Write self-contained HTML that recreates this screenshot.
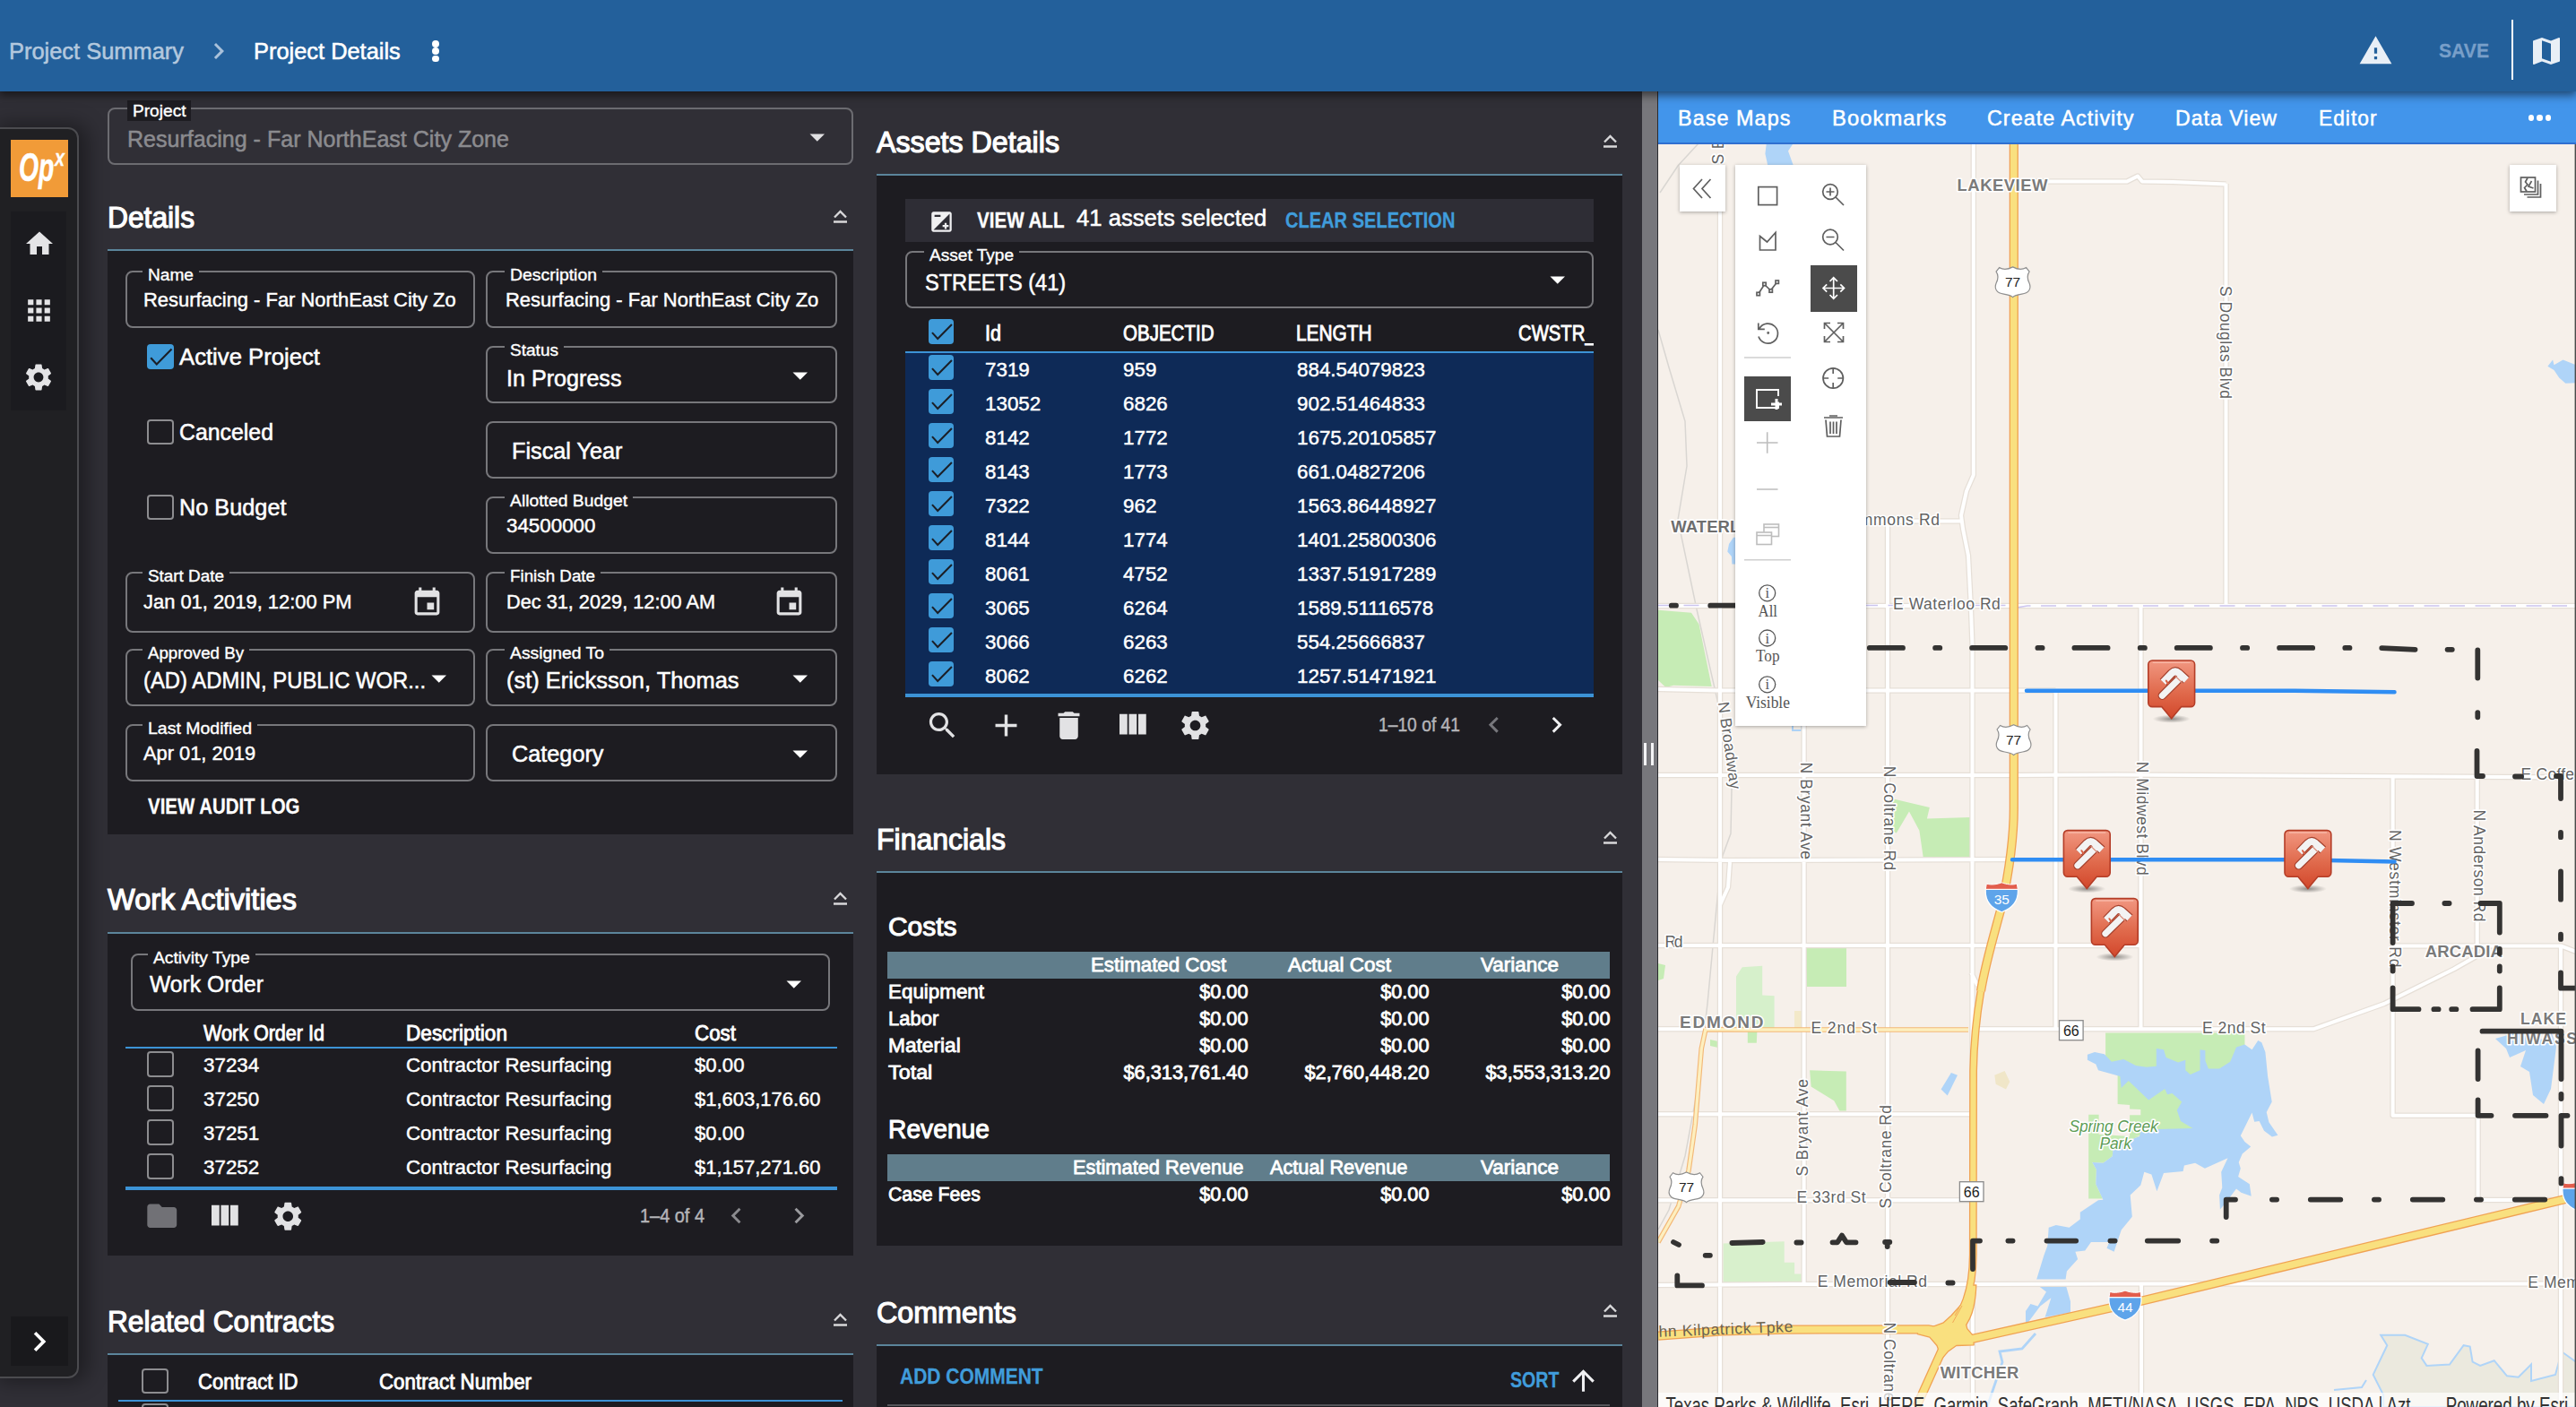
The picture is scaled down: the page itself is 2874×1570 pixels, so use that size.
<!DOCTYPE html>
<html lang="en"><head><meta charset="utf-8"><title>Project Details</title>
<style>

html,body{margin:0;padding:0;background:#302f36;overflow:hidden}
@media (max-width:1500px){#root{transform:scale(.5);transform-origin:0 0}}
#root{position:relative;width:2874px;height:1570px;overflow:hidden;background:#302f36;font-family:"Liberation Sans",sans-serif;color:#fff}
#root div,#root svg,#root span.t{position:absolute}
.t{white-space:nowrap;line-height:1;transform-origin:0 0}
.f{border:2px solid #77777b;border-radius:8px;box-sizing:border-box}
.cb{box-sizing:border-box;border:2px solid #8d8d90;border-radius:4px;width:30px;height:28px}
.cbk{border-radius:4px;width:30px;height:28px;background:#3f9bd9}

</style></head>
<body>
<div id="root">
<div style="left:-4px;top:142px;width:92px;height:1396px;background:#202023;border:2px solid #4b4b4f;border-radius:0 12px 12px 0;box-sizing:border-box;box-shadow:6px 0 22px 4px rgba(0,0,0,.38)"></div>
<div style="left:12px;top:156px;width:64px;height:64px;background:#f19b38"></div>
<span class="t" style="top:164.6px;font-size:44px;font-weight:700;-webkit-text-stroke:0.53px;font-style:italic;left:21.2px;transform:scaleX(0.6431);">Op</span>
<span class="t" style="top:164.4px;font-size:25px;font-weight:700;-webkit-text-stroke:0.30px;font-style:italic;left:61.0px;transform:scaleX(0.7910);">x</span>
<div style="left:12px;top:236px;width:62px;height:222px;background:#1b1b1f"></div>
<svg style="left:25.5px;top:253.5px;" width="36" height="36" viewBox="0 0 24 24"><path fill="#e4e4e6" d="M10 20v-6h4v6h5v-8h3L12 3 2 12h3v8z"/></svg>
<svg style="left:24.5px;top:327.5px;" width="37" height="37" viewBox="0 0 24 24"><path fill="#e4e4e6" d="M4 8h4V4H4v4zm6 12h4v-4h-4v4zm-6 0h4v-4H4v4zm0-6h4v-4H4v4zm6 0h4v-4h-4v4zm6-10v4h4V4h-4zm-6 4h4V4h-4v4zm6 6h4v-4h-4v4zm0 6h4v-4h-4v4z"/></svg>
<svg style="left:25px;top:402.5px;" width="36" height="36" viewBox="0 0 24 24"><path fill="#e4e4e6" d="M19.14 12.94c.04-.3.06-.61.06-.94 0-.32-.02-.64-.07-.94l2.03-1.58c.18-.14.23-.41.12-.61l-1.92-3.32c-.12-.22-.37-.29-.59-.22l-2.39.96c-.5-.38-1.03-.7-1.62-.94l-.36-2.54c-.04-.24-.24-.41-.48-.41h-3.84c-.24 0-.43.17-.47.41l-.36 2.54c-.59.24-1.13.57-1.62.94l-2.39-.96c-.22-.08-.47 0-.59.22L2.74 8.87c-.12.21-.08.47.12.61l2.03 1.58c-.05.3-.09.63-.09.94s.02.64.07.94l-2.03 1.58c-.18.14-.23.41-.12.61l1.92 3.32c.12.22.37.29.59.22l2.39-.96c.5.38 1.03.7 1.62.94l.36 2.54c.05.24.24.41.48.41h3.84c.24 0 .44-.17.47-.41l.36-2.54c.59-.24 1.13-.56 1.62-.94l2.39.96c.22.08.47 0 .59-.22l1.92-3.32c.12-.22.07-.47-.12-.61l-2.01-1.58zM12 15.6c-1.98 0-3.6-1.62-3.6-3.6s1.62-3.6 3.6-3.6 3.6 1.62 3.6 3.6-1.62 3.6-3.6 3.6z"/></svg>
<div style="left:12px;top:1469px;width:64px;height:55px;background:#19191c"></div>
<svg style="left:22px;top:1475px;" width="44" height="44" viewBox="0 0 24 24"><path fill="#fff" d="M10 6L8.59 7.41 13.17 12l-4.58 4.59L10 18l6-6z"/></svg>
<div class="f" style="left:120px;top:120px;width:832px;height:64px;border-color:#6c6c71;"></div>
<div style="left:142px;top:112px;width:71px;height:23px;background:#1d1c21"></div>
<span class="t" style="top:114.7px;font-size:18.8px;-webkit-text-stroke:0.39px;left:147.5px;transform:scaleX(1.0179);">Project</span>
<span class="t" style="top:142.7px;font-size:25.5px;-webkit-text-stroke:0.54px;color:#8b8b8f;left:141.5px;transform:scaleX(0.9823);">Resurfacing - Far NorthEast City Zone</span>
<svg style="left:892.0px;top:132.9px;" width="39.5" height="39.5" viewBox="0 0 24 24"><path fill="#e0e0e2" d="M7 10l5 5 5-5z"/></svg>
<span class="t" style="top:227.1px;font-size:32.5px;-webkit-text-stroke:1.20px;left:120.0px;transform:scaleX(0.9764);">Details</span>
<div style="left:120px;top:278px;width:832px;height:2px;background:#5b859b"></div>
<svg style="left:929px;top:232.7px;" width="17" height="16" viewBox="0 0 17 16"><path d="M2 9.5 L8.5 3 L15 9.5" fill="none" stroke="#d8d8da" stroke-width="2.3"/><path d="M1 14.5 H16" stroke="#d8d8da" stroke-width="2.5"/></svg>
<div style="left:120px;top:280px;width:832px;height:651px;background:#1d1c21"></div>
<div class="f" style="left:140px;top:302px;width:390px;height:64px;"></div>
<div style="left:159px;top:300px;width:63px;height:6px;background:#1d1c21"></div>
<span class="t" style="top:297.8px;font-size:18.8px;-webkit-text-stroke:0.39px;left:165.0px;transform:scaleX(1.0178);">Name</span>
<span class="t" style="top:324.1px;font-size:22.6px;-webkit-text-stroke:0.47px;left:160.4px;transform:scaleX(0.9707);">Resurfacing - Far NorthEast City Zo</span>
<div class="f" style="left:542px;top:302px;width:392px;height:64px;"></div>
<div style="left:563px;top:300px;width:109px;height:6px;background:#1d1c21"></div>
<span class="t" style="top:297.8px;font-size:18.8px;-webkit-text-stroke:0.39px;left:569.0px;transform:scaleX(1.0324);">Description</span>
<span class="t" style="top:324.1px;font-size:22.6px;-webkit-text-stroke:0.47px;left:563.7px;transform:scaleX(0.9727);">Resurfacing - Far NorthEast City Zo</span>
<div class="cbk" style="left:164px;top:384px;width:30px;height:28px"><svg style="left:0;top:0" width="30" height="28" viewBox="0 0 30 28"><path d="M4.2 15.2 L10.8 22.5 L27.5 5.5" fill="none" stroke="#1b1f27" stroke-width="2.15"/></svg></div>
<span class="t" style="top:386.1px;font-size:25.6px;-webkit-text-stroke:0.54px;left:200.0px;transform:scaleX(1.0034);">Active Project</span>
<div class="f" style="left:542px;top:386px;width:392px;height:64px;"></div>
<div style="left:563px;top:384px;width:66px;height:6px;background:#1d1c21"></div>
<span class="t" style="top:381.8px;font-size:18.8px;-webkit-text-stroke:0.39px;left:569.0px;transform:scaleX(1.0141);">Status</span>
<span class="t" style="top:409.6px;font-size:25px;-webkit-text-stroke:0.53px;left:564.5px;transform:scaleX(1.0051);">In Progress</span>
<svg style="left:872.8px;top:399.4px;" width="39.5" height="39.5" viewBox="0 0 24 24"><path fill="#fff" d="M7 10l5 5 5-5z"/></svg>
<div class="cb" style="left:164px;top:468px;width:30px;height:28px"></div>
<span class="t" style="top:470.1px;font-size:25.6px;-webkit-text-stroke:0.54px;left:200.0px;transform:scaleX(0.9710);">Canceled</span>
<div class="f" style="left:542px;top:470px;width:392px;height:64px;"></div>
<span class="t" style="top:490.8px;font-size:25px;-webkit-text-stroke:0.53px;left:570.5px;transform:scaleX(1.0098);">Fiscal Year</span>
<div class="cb" style="left:164px;top:552px;width:30px;height:28px"></div>
<span class="t" style="top:554.1px;font-size:25.6px;-webkit-text-stroke:0.54px;left:200.0px;transform:scaleX(0.9880);">No Budget</span>
<div class="f" style="left:542px;top:554px;width:392px;height:64px;"></div>
<div style="left:563px;top:552px;width:143px;height:6px;background:#1d1c21"></div>
<span class="t" style="top:549.8px;font-size:18.8px;-webkit-text-stroke:0.39px;left:569.0px;transform:scaleX(1.0283);">Allotted Budget</span>
<span class="t" style="top:576.2px;font-size:22.6px;-webkit-text-stroke:0.47px;left:564.5px;transform:scaleX(0.9897);">34500000</span>
<div class="f" style="left:140px;top:638px;width:390px;height:68px;"></div>
<div style="left:159px;top:636px;width:97px;height:6px;background:#1d1c21"></div>
<span class="t" style="top:633.8px;font-size:18.8px;-webkit-text-stroke:0.39px;left:165.0px;transform:scaleX(1.0052);">Start Date</span>
<span class="t" style="top:661.4px;font-size:22.6px;-webkit-text-stroke:0.47px;left:160.4px;transform:scaleX(0.9695);">Jan 01, 2019, 12:00 PM</span>
<svg style="left:458px;top:653.5px;" width="37" height="37" viewBox="0 0 24 24"><path fill="#e2e2e4" d="M17 12h-5v5h5v-5zM16 1v2H8V1H6v2H5c-1.11 0-1.99.9-1.99 2L3 19c0 1.1.89 2 2 2h14c1.1 0 2-.9 2-2V5c0-1.1-.9-2-2-2h-1V1h-2zm3 18H5V8h14v11z"/></svg>
<div class="f" style="left:542px;top:638px;width:392px;height:68px;"></div>
<div style="left:563px;top:636px;width:107px;height:6px;background:#1d1c21"></div>
<span class="t" style="top:633.8px;font-size:18.8px;-webkit-text-stroke:0.39px;left:569.0px;transform:scaleX(1.0000);">Finish Date</span>
<span class="t" style="top:661.4px;font-size:22.6px;-webkit-text-stroke:0.47px;left:564.5px;transform:scaleX(0.9611);">Dec 31, 2029, 12:00 AM</span>
<svg style="left:862px;top:653.5px;" width="37" height="37" viewBox="0 0 24 24"><path fill="#e2e2e4" d="M17 12h-5v5h5v-5zM16 1v2H8V1H6v2H5c-1.11 0-1.99.9-1.99 2L3 19c0 1.1.89 2 2 2h14c1.1 0 2-.9 2-2V5c0-1.1-.9-2-2-2h-1V1h-2zm3 18H5V8h14v11z"/></svg>
<div class="f" style="left:140px;top:724px;width:390px;height:64px;"></div>
<div style="left:159px;top:722px;width:119px;height:6px;background:#1d1c21"></div>
<span class="t" style="top:719.8px;font-size:18.8px;-webkit-text-stroke:0.39px;left:165.0px;transform:scaleX(0.9949);">Approved By</span>
<span class="t" style="top:746.8px;font-size:25px;-webkit-text-stroke:0.53px;left:160.4px;transform:scaleX(0.9531);">(AD) ADMIN, PUBLIC WOR...</span>
<svg style="left:469.9px;top:736.9px;" width="39.5" height="39.5" viewBox="0 0 24 24"><path fill="#fff" d="M7 10l5 5 5-5z"/></svg>
<div class="f" style="left:542px;top:724px;width:392px;height:64px;"></div>
<div style="left:563px;top:722px;width:117px;height:6px;background:#1d1c21"></div>
<span class="t" style="top:719.8px;font-size:18.8px;-webkit-text-stroke:0.39px;left:569.0px;transform:scaleX(1.0296);">Assigned To</span>
<span class="t" style="top:746.8px;font-size:25px;-webkit-text-stroke:0.53px;left:564.5px;transform:scaleX(1.0170);">(st) Ericksson, Thomas</span>
<svg style="left:872.8px;top:736.9px;" width="39.5" height="39.5" viewBox="0 0 24 24"><path fill="#fff" d="M7 10l5 5 5-5z"/></svg>
<div class="f" style="left:140px;top:808px;width:390px;height:64px;"></div>
<div style="left:159px;top:806px;width:128px;height:6px;background:#1d1c21"></div>
<span class="t" style="top:803.8px;font-size:18.8px;-webkit-text-stroke:0.39px;left:165.0px;transform:scaleX(1.0383);">Last Modified</span>
<span class="t" style="top:829.5px;font-size:22.6px;-webkit-text-stroke:0.47px;left:160.4px;transform:scaleX(0.9668);">Apr 01, 2019</span>
<div class="f" style="left:542px;top:808px;width:392px;height:64px;"></div>
<span class="t" style="top:829.3px;font-size:25px;-webkit-text-stroke:0.53px;left:570.5px;transform:scaleX(1.0103);">Category</span>
<svg style="left:872.8px;top:821.4px;" width="39.5" height="39.5" viewBox="0 0 24 24"><path fill="#fff" d="M7 10l5 5 5-5z"/></svg>
<span class="t" style="top:889.1px;font-size:23.5px;font-weight:700;-webkit-text-stroke:0.28px;left:165.0px;transform:scaleX(0.8694);">VIEW AUDIT LOG</span>
<span class="t" style="top:988.3px;font-size:32.5px;-webkit-text-stroke:1.20px;left:120.0px;transform:scaleX(1.0014);">Work Activities</span>
<div style="left:120px;top:1040px;width:832px;height:2px;background:#5b859b"></div>
<svg style="left:929px;top:993.7px;" width="17" height="16" viewBox="0 0 17 16"><path d="M2 9.5 L8.5 3 L15 9.5" fill="none" stroke="#d8d8da" stroke-width="2.3"/><path d="M1 14.5 H16" stroke="#d8d8da" stroke-width="2.5"/></svg>
<div style="left:120px;top:1042px;width:832px;height:359px;background:#1d1c21"></div>
<div class="f" style="left:146px;top:1064px;width:780px;height:64px;"></div>
<div style="left:165px;top:1062px;width:119.69999999999999px;height:6px;background:#1d1c21"></div>
<span class="t" style="top:1059.8px;font-size:18.8px;-webkit-text-stroke:0.39px;left:171.0px;transform:scaleX(1.0250);">Activity Type</span>
<span class="t" style="top:1086.2px;font-size:25px;-webkit-text-stroke:0.53px;left:167.0px;transform:scaleX(0.9865);">Work Order</span>
<svg style="left:866.2px;top:1077.9px;" width="39.5" height="39.5" viewBox="0 0 24 24"><path fill="#fff" d="M7 10l5 5 5-5z"/></svg>
<span class="t" style="top:1141.5px;font-size:23.5px;-webkit-text-stroke:0.87px;left:227.0px;transform:scaleX(0.9175);">Work Order Id</span>
<span class="t" style="top:1141.5px;font-size:23.5px;-webkit-text-stroke:0.87px;left:453.0px;transform:scaleX(0.9613);">Description</span>
<span class="t" style="top:1141.5px;font-size:23.5px;-webkit-text-stroke:0.87px;left:775.0px;transform:scaleX(0.9518);">Cost</span>
<div style="left:140px;top:1167.6px;width:794px;height:2px;background:#3c93d6"></div>
<div class="cb" style="left:164px;top:1172.5px;width:30px;height:29px"></div>
<span class="t" style="top:1177.8px;font-size:22.6px;-webkit-text-stroke:0.47px;left:227.3px;transform:scaleX(0.9900);">37234</span>
<span class="t" style="top:1177.8px;font-size:22.6px;-webkit-text-stroke:0.47px;left:453.0px;transform:scaleX(0.9878);">Contractor Resurfacing</span>
<span class="t" style="top:1177.8px;font-size:22.6px;-webkit-text-stroke:0.47px;left:775.0px;transform:scaleX(0.9815);">$0.00</span>
<div class="cb" style="left:164px;top:1210.5px;width:30px;height:29px"></div>
<span class="t" style="top:1215.8px;font-size:22.6px;-webkit-text-stroke:0.47px;left:227.3px;transform:scaleX(0.9900);">37250</span>
<span class="t" style="top:1215.8px;font-size:22.6px;-webkit-text-stroke:0.47px;left:453.0px;transform:scaleX(0.9878);">Contractor Resurfacing</span>
<span class="t" style="top:1215.8px;font-size:22.6px;-webkit-text-stroke:0.47px;left:775.0px;transform:scaleX(0.9723);">$1,603,176.60</span>
<div class="cb" style="left:164px;top:1248.5px;width:30px;height:29px"></div>
<span class="t" style="top:1253.8px;font-size:22.6px;-webkit-text-stroke:0.47px;left:227.3px;transform:scaleX(0.9900);">37251</span>
<span class="t" style="top:1253.8px;font-size:22.6px;-webkit-text-stroke:0.47px;left:453.0px;transform:scaleX(0.9878);">Contractor Resurfacing</span>
<span class="t" style="top:1253.8px;font-size:22.6px;-webkit-text-stroke:0.47px;left:775.0px;transform:scaleX(0.9815);">$0.00</span>
<div class="cb" style="left:164px;top:1286.5px;width:30px;height:29px"></div>
<span class="t" style="top:1291.8px;font-size:22.6px;-webkit-text-stroke:0.47px;left:227.3px;transform:scaleX(0.9900);">37252</span>
<span class="t" style="top:1291.8px;font-size:22.6px;-webkit-text-stroke:0.47px;left:453.0px;transform:scaleX(0.9878);">Contractor Resurfacing</span>
<span class="t" style="top:1291.8px;font-size:22.6px;-webkit-text-stroke:0.47px;left:775.0px;transform:scaleX(0.9723);">$1,157,271.60</span>
<div style="left:140px;top:1324px;width:794px;height:4px;background:#3c93d6"></div>
<svg style="left:161px;top:1336.5px;" width="39.5" height="39.5" viewBox="0 0 24 24"><path fill="#717176" d="M10 4H4c-1.1 0-1.99.9-1.99 2L2 18c0 1.1.9 2 2 2h16c1.1 0 2-.9 2-2V8c0-1.1-.9-2-2-2h-8l-2-2z"/></svg>
<svg style="left:229px;top:1336.4px;" width="42" height="42" viewBox="0 0 24 24"><path fill="#e2e2e4" d="M10 18h5V5h-5v13zm-6 0h5V5H4v13zM16 5v13h5V5h-5z"/></svg>
<svg style="left:302px;top:1338px;" width="38.5" height="38.5" viewBox="0 0 24 24"><path fill="#e2e2e4" d="M19.14 12.94c.04-.3.06-.61.06-.94 0-.32-.02-.64-.07-.94l2.03-1.58c.18-.14.23-.41.12-.61l-1.92-3.32c-.12-.22-.37-.29-.59-.22l-2.39.96c-.5-.38-1.03-.7-1.62-.94l-.36-2.54c-.04-.24-.24-.41-.48-.41h-3.84c-.24 0-.43.17-.47.41l-.36 2.54c-.59.24-1.13.57-1.62.94l-2.39-.96c-.22-.08-.47 0-.59.22L2.74 8.87c-.12.21-.08.47.12.61l2.03 1.58c-.05.3-.09.63-.09.94s.02.64.07.94l-2.03 1.58c-.18.14-.23.41-.12.61l1.92 3.32c.12.22.37.29.59.22l2.39-.96c.5.38 1.03.7 1.62.94l.36 2.54c.05.24.24.41.48.41h3.84c.24 0 .44-.17.47-.41l.36-2.54c.59-.24 1.13-.56 1.62-.94l2.39.96c.22.08.47 0 .59-.22l1.92-3.32c.12-.22.07-.47-.12-.61l-2.01-1.58zM12 15.6c-1.98 0-3.6-1.62-3.6-3.6s1.62-3.6 3.6-3.6 3.6 1.62 3.6 3.6-1.62 3.6-3.6 3.6z"/></svg>
<span class="t" style="top:1347.4px;font-size:21.5px;-webkit-text-stroke:0.45px;color:#b4b4b8;left:714.0px;transform:scaleX(0.9264);">1–4 of 4</span>
<svg style="left:804.1px;top:1339.3px;" width="35" height="35" viewBox="0 0 24 24"><path fill="#8a8a8e" d="M15.41 7.41L14 6l-6 6 6 6 1.41-1.41L10.83 12z"/></svg>
<svg style="left:873.5px;top:1339.3px;" width="35" height="35" viewBox="0 0 24 24"><path fill="#9a9a9e" d="M10 6L8.59 7.41 13.17 12l-4.58 4.59L10 18l6-6z"/></svg>
<span class="t" style="top:1458.5px;font-size:32.5px;-webkit-text-stroke:1.20px;left:120.0px;transform:scaleX(0.9726);">Related Contracts</span>
<div style="left:120px;top:1510px;width:832px;height:2px;background:#5b859b"></div>
<svg style="left:929px;top:1464.2px;" width="17" height="16" viewBox="0 0 17 16"><path d="M2 9.5 L8.5 3 L15 9.5" fill="none" stroke="#d8d8da" stroke-width="2.3"/><path d="M1 14.5 H16" stroke="#d8d8da" stroke-width="2.5"/></svg>
<div style="left:120px;top:1512px;width:832px;height:80px;background:#1d1c21"></div>
<div class="cb" style="left:158px;top:1526.5px;width:30px;height:28px"></div>
<span class="t" style="top:1531.4px;font-size:23.5px;-webkit-text-stroke:0.87px;left:220.5px;transform:scaleX(0.9382);">Contract ID</span>
<span class="t" style="top:1531.4px;font-size:23.5px;-webkit-text-stroke:0.87px;left:423.0px;transform:scaleX(0.9501);">Contract Number</span>
<div style="left:132px;top:1562px;width:808px;height:2px;background:#3c93d6"></div>
<div class="cb" style="left:158px;top:1566px;width:30px;height:28px"></div>
<span class="t" style="top:142.9px;font-size:32.5px;-webkit-text-stroke:1.20px;left:978.0px;transform:scaleX(0.9907);">Assets Details</span>
<div style="left:978px;top:194px;width:832px;height:2px;background:#5b859b"></div>
<svg style="left:1788px;top:149px;" width="17" height="16" viewBox="0 0 17 16"><path d="M2 9.5 L8.5 3 L15 9.5" fill="none" stroke="#d8d8da" stroke-width="2.3"/><path d="M1 14.5 H16" stroke="#d8d8da" stroke-width="2.5"/></svg>
<div style="left:978px;top:196px;width:832px;height:668px;background:#1d1c21"></div>
<div style="left:1010px;top:222px;width:768px;height:48px;background:#2e2d35"></div>
<svg style="left:1036.5px;top:233.5px;" width="27" height="27" viewBox="0 0 24 24"><path fill="#f0f0f2" d="M15 17v2h2v-2h2v-2h-2v-2h-2v2h-2v2h2zm5-15H4c-1.1 0-2 .9-2 2v16c0 1.1.9 2 2 2h16c1.1 0 2-.9 2-2V4c0-1.1-.9-2-2-2zM5 5h6v2H5V5zm15 15H4L20 4v16z"/></svg>
<span class="t" style="top:234.8px;font-size:23px;font-weight:700;-webkit-text-stroke:0.28px;left:1090.0px;transform:scaleX(0.8942);">VIEW ALL</span>
<span class="t" style="top:230.6px;font-size:25px;-webkit-text-stroke:0.53px;left:1200.7px;transform:scaleX(1.0252);">41 assets selected</span>
<span class="t" style="top:234.8px;font-size:23px;font-weight:700;-webkit-text-stroke:0.28px;color:#409cdb;left:1433.6px;transform:scaleX(0.8719);">CLEAR SELECTION</span>
<div class="f" style="left:1010px;top:280px;width:768px;height:64px;"></div>
<div style="left:1031px;top:278px;width:106px;height:6px;background:#1d1c21"></div>
<span class="t" style="top:275.8px;font-size:18.8px;-webkit-text-stroke:0.39px;left:1037.0px;transform:scaleX(1.0154);">Asset Type</span>
<span class="t" style="top:302.8px;font-size:25px;-webkit-text-stroke:0.53px;left:1031.8px;transform:scaleX(0.9430);">STREETS (41)</span>
<svg style="left:1718.2px;top:292.4px;" width="39.5" height="39.5" viewBox="0 0 24 24"><path fill="#fff" d="M7 10l5 5 5-5z"/></svg>
<div class="cbk" style="left:1035.7px;top:356px;width:28.3px;height:28px"><svg style="left:0;top:0" width="28.3" height="28" viewBox="0 0 30 28"><path d="M4.2 15.2 L10.8 22.5 L27.5 5.5" fill="none" stroke="#1b1f27" stroke-width="2.15"/></svg></div>
<span class="t" style="top:361.1px;font-size:23.5px;-webkit-text-stroke:0.87px;left:1099.0px;transform:scaleX(0.9179);">Id</span>
<span class="t" style="top:361.1px;font-size:23.5px;-webkit-text-stroke:0.87px;left:1252.5px;transform:scaleX(0.8734);">OBJECTID</span>
<span class="t" style="top:361.1px;font-size:23.5px;-webkit-text-stroke:0.87px;left:1446.4px;transform:scaleX(0.8875);">LENGTH</span>
<div style="left:1694px;top:355px;width:84px;height:36px;overflow:hidden"></div>
<span class="t" style="top:361.1px;font-size:23.5px;-webkit-text-stroke:0.87px;left:1694.3px;transform:scaleX(0.8636);">CWSTR_</span>
<div style="left:1778px;top:355px;width:32px;height:36px;background:#1d1c21"></div>
<div style="left:1010px;top:392px;width:768px;height:2px;background:#3c93d6"></div>
<div style="left:1010px;top:394px;width:768px;height:380px;background:#0e2a57"></div>
<div class="cbk" style="left:1035.7px;top:395.8px;width:28.3px;height:28px"><svg style="left:0;top:0" width="28.3" height="28" viewBox="0 0 30 28"><path d="M4.2 15.2 L10.8 22.5 L27.5 5.5" fill="none" stroke="#1b1f27" stroke-width="2.15"/></svg></div>
<span class="t" style="top:401.9px;font-size:22.6px;-webkit-text-stroke:0.47px;left:1099.3px;transform:scaleX(0.9900);">7319</span>
<span class="t" style="top:401.9px;font-size:22.6px;-webkit-text-stroke:0.47px;left:1252.8px;transform:scaleX(0.9900);">959</span>
<span class="t" style="top:401.9px;font-size:22.6px;-webkit-text-stroke:0.47px;left:1446.7px;transform:scaleX(0.9900);">884.54079823</span>
<div class="cbk" style="left:1035.7px;top:433.8px;width:28.3px;height:28px"><svg style="left:0;top:0" width="28.3" height="28" viewBox="0 0 30 28"><path d="M4.2 15.2 L10.8 22.5 L27.5 5.5" fill="none" stroke="#1b1f27" stroke-width="2.15"/></svg></div>
<span class="t" style="top:439.9px;font-size:22.6px;-webkit-text-stroke:0.47px;left:1099.3px;transform:scaleX(0.9900);">13052</span>
<span class="t" style="top:439.9px;font-size:22.6px;-webkit-text-stroke:0.47px;left:1252.8px;transform:scaleX(0.9900);">6826</span>
<span class="t" style="top:439.9px;font-size:22.6px;-webkit-text-stroke:0.47px;left:1446.7px;transform:scaleX(0.9900);">902.51464833</span>
<div class="cbk" style="left:1035.7px;top:471.8px;width:28.3px;height:28px"><svg style="left:0;top:0" width="28.3" height="28" viewBox="0 0 30 28"><path d="M4.2 15.2 L10.8 22.5 L27.5 5.5" fill="none" stroke="#1b1f27" stroke-width="2.15"/></svg></div>
<span class="t" style="top:477.9px;font-size:22.6px;-webkit-text-stroke:0.47px;left:1099.3px;transform:scaleX(0.9900);">8142</span>
<span class="t" style="top:477.9px;font-size:22.6px;-webkit-text-stroke:0.47px;left:1252.8px;transform:scaleX(0.9900);">1772</span>
<span class="t" style="top:477.9px;font-size:22.6px;-webkit-text-stroke:0.47px;left:1446.7px;transform:scaleX(0.9900);">1675.20105857</span>
<div class="cbk" style="left:1035.7px;top:509.8px;width:28.3px;height:28px"><svg style="left:0;top:0" width="28.3" height="28" viewBox="0 0 30 28"><path d="M4.2 15.2 L10.8 22.5 L27.5 5.5" fill="none" stroke="#1b1f27" stroke-width="2.15"/></svg></div>
<span class="t" style="top:515.9px;font-size:22.6px;-webkit-text-stroke:0.47px;left:1099.3px;transform:scaleX(0.9900);">8143</span>
<span class="t" style="top:515.9px;font-size:22.6px;-webkit-text-stroke:0.47px;left:1252.8px;transform:scaleX(0.9900);">1773</span>
<span class="t" style="top:515.9px;font-size:22.6px;-webkit-text-stroke:0.47px;left:1446.7px;transform:scaleX(0.9900);">661.04827206</span>
<div class="cbk" style="left:1035.7px;top:547.8px;width:28.3px;height:28px"><svg style="left:0;top:0" width="28.3" height="28" viewBox="0 0 30 28"><path d="M4.2 15.2 L10.8 22.5 L27.5 5.5" fill="none" stroke="#1b1f27" stroke-width="2.15"/></svg></div>
<span class="t" style="top:553.9px;font-size:22.6px;-webkit-text-stroke:0.47px;left:1099.3px;transform:scaleX(0.9900);">7322</span>
<span class="t" style="top:553.9px;font-size:22.6px;-webkit-text-stroke:0.47px;left:1252.8px;transform:scaleX(0.9900);">962</span>
<span class="t" style="top:553.9px;font-size:22.6px;-webkit-text-stroke:0.47px;left:1446.7px;transform:scaleX(0.9900);">1563.86448927</span>
<div class="cbk" style="left:1035.7px;top:585.8px;width:28.3px;height:28px"><svg style="left:0;top:0" width="28.3" height="28" viewBox="0 0 30 28"><path d="M4.2 15.2 L10.8 22.5 L27.5 5.5" fill="none" stroke="#1b1f27" stroke-width="2.15"/></svg></div>
<span class="t" style="top:591.9px;font-size:22.6px;-webkit-text-stroke:0.47px;left:1099.3px;transform:scaleX(0.9900);">8144</span>
<span class="t" style="top:591.9px;font-size:22.6px;-webkit-text-stroke:0.47px;left:1252.8px;transform:scaleX(0.9900);">1774</span>
<span class="t" style="top:591.9px;font-size:22.6px;-webkit-text-stroke:0.47px;left:1446.7px;transform:scaleX(0.9900);">1401.25800306</span>
<div class="cbk" style="left:1035.7px;top:623.8px;width:28.3px;height:28px"><svg style="left:0;top:0" width="28.3" height="28" viewBox="0 0 30 28"><path d="M4.2 15.2 L10.8 22.5 L27.5 5.5" fill="none" stroke="#1b1f27" stroke-width="2.15"/></svg></div>
<span class="t" style="top:629.9px;font-size:22.6px;-webkit-text-stroke:0.47px;left:1099.3px;transform:scaleX(0.9900);">8061</span>
<span class="t" style="top:629.9px;font-size:22.6px;-webkit-text-stroke:0.47px;left:1252.8px;transform:scaleX(0.9900);">4752</span>
<span class="t" style="top:629.9px;font-size:22.6px;-webkit-text-stroke:0.47px;left:1446.7px;transform:scaleX(0.9900);">1337.51917289</span>
<div class="cbk" style="left:1035.7px;top:661.8px;width:28.3px;height:28px"><svg style="left:0;top:0" width="28.3" height="28" viewBox="0 0 30 28"><path d="M4.2 15.2 L10.8 22.5 L27.5 5.5" fill="none" stroke="#1b1f27" stroke-width="2.15"/></svg></div>
<span class="t" style="top:667.9px;font-size:22.6px;-webkit-text-stroke:0.47px;left:1099.3px;transform:scaleX(0.9900);">3065</span>
<span class="t" style="top:667.9px;font-size:22.6px;-webkit-text-stroke:0.47px;left:1252.8px;transform:scaleX(0.9900);">6264</span>
<span class="t" style="top:667.9px;font-size:22.6px;-webkit-text-stroke:0.47px;left:1446.7px;transform:scaleX(0.9900);">1589.51116578</span>
<div class="cbk" style="left:1035.7px;top:699.8px;width:28.3px;height:28px"><svg style="left:0;top:0" width="28.3" height="28" viewBox="0 0 30 28"><path d="M4.2 15.2 L10.8 22.5 L27.5 5.5" fill="none" stroke="#1b1f27" stroke-width="2.15"/></svg></div>
<span class="t" style="top:705.9px;font-size:22.6px;-webkit-text-stroke:0.47px;left:1099.3px;transform:scaleX(0.9900);">3066</span>
<span class="t" style="top:705.9px;font-size:22.6px;-webkit-text-stroke:0.47px;left:1252.8px;transform:scaleX(0.9900);">6263</span>
<span class="t" style="top:705.9px;font-size:22.6px;-webkit-text-stroke:0.47px;left:1446.7px;transform:scaleX(0.9900);">554.25666837</span>
<div class="cbk" style="left:1035.7px;top:737.8px;width:28.3px;height:28px"><svg style="left:0;top:0" width="28.3" height="28" viewBox="0 0 30 28"><path d="M4.2 15.2 L10.8 22.5 L27.5 5.5" fill="none" stroke="#1b1f27" stroke-width="2.15"/></svg></div>
<span class="t" style="top:743.9px;font-size:22.6px;-webkit-text-stroke:0.47px;left:1099.3px;transform:scaleX(0.9900);">8062</span>
<span class="t" style="top:743.9px;font-size:22.6px;-webkit-text-stroke:0.47px;left:1252.8px;transform:scaleX(0.9900);">6262</span>
<span class="t" style="top:743.9px;font-size:22.6px;-webkit-text-stroke:0.47px;left:1446.7px;transform:scaleX(0.9900);">1257.51471921</span>
<div style="left:1010px;top:774px;width:768px;height:4px;background:#3c93d6"></div>
<svg style="left:1032px;top:790px;" width="39" height="39" viewBox="0 0 24 24"><path fill="#e2e2e4" d="M15.5 14h-.79l-.28-.27C15.41 12.59 16 11.11 16 9.5 16 5.91 13.09 3 9.5 3S3 5.91 3 9.5 5.91 16 9.5 16c1.61 0 3.09-.59 4.23-1.57l.27.28v.79l5 4.99L20.49 19l-4.99-5zm-6 0C7.01 14 5 11.99 5 9.5S7.01 5 9.5 5 14 7.01 14 9.5 11.99 14 9.5 14z"/></svg>
<svg style="left:1101.5px;top:788.5px;" width="41" height="41" viewBox="0 0 24 24"><path fill="#e2e2e4" d="M19 13h-6v6h-2v-6H5v-2h6V5h2v6h6v2z"/></svg>
<svg style="left:1171.5px;top:788.5px;" width="41" height="41" viewBox="0 0 24 24"><path fill="#e2e2e4" d="M6 19c0 1.1.9 2 2 2h8c1.1 0 2-.9 2-2V7H6v12zM19 4h-3.5l-1-1h-5l-1 1H5v2h14V4z"/></svg>
<svg style="left:1241.7px;top:788px;" width="42" height="42" viewBox="0 0 24 24"><path fill="#e2e2e4" d="M10 18h5V5h-5v13zm-6 0h5V5H4v13zM16 5v13h5V5h-5z"/></svg>
<svg style="left:1313.5px;top:789.5px;" width="39" height="39" viewBox="0 0 24 24"><path fill="#e2e2e4" d="M19.14 12.94c.04-.3.06-.61.06-.94 0-.32-.02-.64-.07-.94l2.03-1.58c.18-.14.23-.41.12-.61l-1.92-3.32c-.12-.22-.37-.29-.59-.22l-2.39.96c-.5-.38-1.03-.7-1.62-.94l-.36-2.54c-.04-.24-.24-.41-.48-.41h-3.84c-.24 0-.43.17-.47.41l-.36 2.54c-.59.24-1.13.57-1.62.94l-2.39-.96c-.22-.08-.47 0-.59.22L2.74 8.87c-.12.21-.08.47.12.61l2.03 1.58c-.05.3-.09.63-.09.94s.02.64.07.94l-2.03 1.58c-.18.14-.23.41-.12.61l1.92 3.32c.12.22.37.29.59.22l2.39-.96c.5.38 1.03.7 1.62.94l.36 2.54c.05.24.24.41.48.41h3.84c.24 0 .44-.17.47-.41l.36-2.54c.59-.24 1.13-.56 1.62-.94l2.39.96c.22.08.47 0 .59-.22l1.92-3.32c.12-.22.07-.47-.12-.61l-2.01-1.58zM12 15.6c-1.98 0-3.6-1.62-3.6-3.6s1.62-3.6 3.6-3.6 3.6 1.62 3.6 3.6-1.62 3.6-3.6 3.6z"/></svg>
<span class="t" style="top:799.2px;font-size:21.5px;-webkit-text-stroke:0.45px;color:#b4b4b8;left:1538.0px;transform:scaleX(0.8954);">1–10 of 41</span>
<svg style="left:1649px;top:791.2px;" width="35.5" height="35.5" viewBox="0 0 24 24"><path fill="#77777c" d="M15.41 7.41L14 6l-6 6 6 6 1.41-1.41L10.83 12z"/></svg>
<svg style="left:1719.2px;top:791.2px;" width="35.5" height="35.5" viewBox="0 0 24 24"><path fill="#f0f0f2" d="M10 6L8.59 7.41 13.17 12l-4.58 4.59L10 18l6-6z"/></svg>
<span class="t" style="top:920.7px;font-size:32.5px;-webkit-text-stroke:1.20px;left:978.0px;transform:scaleX(0.9841);">Financials</span>
<div style="left:978px;top:972px;width:832px;height:2px;background:#5b859b"></div>
<svg style="left:1788px;top:926px;" width="17" height="16" viewBox="0 0 17 16"><path d="M2 9.5 L8.5 3 L15 9.5" fill="none" stroke="#d8d8da" stroke-width="2.3"/><path d="M1 14.5 H16" stroke="#d8d8da" stroke-width="2.5"/></svg>
<div style="left:978px;top:974px;width:832px;height:416px;background:#1d1c21"></div>
<span class="t" style="top:1018.6px;font-size:30px;-webkit-text-stroke:1.11px;left:991.0px;transform:scaleX(0.9976);">Costs</span>
<div style="left:990px;top:1062px;width:806px;height:29.7px;background:#607d8b"></div>
<span class="t" style="top:1064.8px;font-size:22.8px;-webkit-text-stroke:0.84px;left:1216.5px;transform:scaleX(0.9781);">Estimated Cost</span>
<span class="t" style="top:1064.8px;font-size:22.8px;-webkit-text-stroke:0.84px;left:1436.6px;transform:scaleX(0.9856);">Actual Cost</span>
<span class="t" style="top:1064.8px;font-size:22.8px;-webkit-text-stroke:0.84px;left:1652.0px;transform:scaleX(0.9853);">Variance</span>
<span class="t" style="top:1095.8px;font-size:22.6px;-webkit-text-stroke:0.84px;left:990.7px;transform:scaleX(0.9906);">Equipment</span>
<span class="t" style="top:1095.8px;font-size:22.6px;-webkit-text-stroke:0.84px;right:1481.6px;transform-origin:100% 0;transform:scaleX(0.9620);">$0.00</span>
<span class="t" style="top:1095.8px;font-size:22.6px;-webkit-text-stroke:0.84px;right:1279.7px;transform-origin:100% 0;transform:scaleX(0.9620);">$0.00</span>
<span class="t" style="top:1095.8px;font-size:22.6px;-webkit-text-stroke:0.84px;right:1077.8px;transform-origin:100% 0;transform:scaleX(0.9620);">$0.00</span>
<span class="t" style="top:1125.8px;font-size:22.6px;-webkit-text-stroke:0.84px;left:990.7px;transform:scaleX(0.9741);">Labor</span>
<span class="t" style="top:1125.8px;font-size:22.6px;-webkit-text-stroke:0.84px;right:1481.6px;transform-origin:100% 0;transform:scaleX(0.9620);">$0.00</span>
<span class="t" style="top:1125.8px;font-size:22.6px;-webkit-text-stroke:0.84px;right:1279.7px;transform-origin:100% 0;transform:scaleX(0.9620);">$0.00</span>
<span class="t" style="top:1125.8px;font-size:22.6px;-webkit-text-stroke:0.84px;right:1077.8px;transform-origin:100% 0;transform:scaleX(0.9620);">$0.00</span>
<span class="t" style="top:1155.9px;font-size:22.6px;-webkit-text-stroke:0.84px;left:990.7px;transform:scaleX(1.0055);">Material</span>
<span class="t" style="top:1155.9px;font-size:22.6px;-webkit-text-stroke:0.84px;right:1481.6px;transform-origin:100% 0;transform:scaleX(0.9620);">$0.00</span>
<span class="t" style="top:1155.9px;font-size:22.6px;-webkit-text-stroke:0.84px;right:1279.7px;transform-origin:100% 0;transform:scaleX(0.9620);">$0.00</span>
<span class="t" style="top:1155.9px;font-size:22.6px;-webkit-text-stroke:0.84px;right:1077.8px;transform-origin:100% 0;transform:scaleX(0.9620);">$0.00</span>
<span class="t" style="top:1185.9px;font-size:22.6px;-webkit-text-stroke:0.84px;left:990.7px;transform:scaleX(1.0328);">Total</span>
<span class="t" style="top:1185.9px;font-size:22.6px;-webkit-text-stroke:0.84px;right:1481.6px;transform-origin:100% 0;transform:scaleX(0.9620);">$6,313,761.40</span>
<span class="t" style="top:1185.9px;font-size:22.6px;-webkit-text-stroke:0.84px;right:1279.7px;transform-origin:100% 0;transform:scaleX(0.9620);">$2,760,448.20</span>
<span class="t" style="top:1185.9px;font-size:22.6px;-webkit-text-stroke:0.84px;right:1077.8px;transform-origin:100% 0;transform:scaleX(0.9620);">$3,553,313.20</span>
<span class="t" style="top:1244.6px;font-size:30px;-webkit-text-stroke:1.11px;left:991.0px;transform:scaleX(0.9409);">Revenue</span>
<div style="left:990px;top:1288px;width:806px;height:30px;background:#607d8b"></div>
<span class="t" style="top:1290.9px;font-size:22.8px;-webkit-text-stroke:0.84px;left:1196.6px;transform:scaleX(0.9570);">Estimated Revenue</span>
<span class="t" style="top:1290.9px;font-size:22.8px;-webkit-text-stroke:0.84px;left:1417.4px;transform:scaleX(0.9525);">Actual Revenue</span>
<span class="t" style="top:1290.9px;font-size:22.8px;-webkit-text-stroke:0.84px;left:1652.0px;transform:scaleX(0.9853);">Variance</span>
<span class="t" style="top:1321.9px;font-size:22.6px;-webkit-text-stroke:0.84px;left:990.7px;transform:scaleX(0.9408);">Case Fees</span>
<span class="t" style="top:1321.9px;font-size:22.6px;-webkit-text-stroke:0.84px;right:1481.6px;transform-origin:100% 0;transform:scaleX(0.9620);">$0.00</span>
<span class="t" style="top:1321.9px;font-size:22.6px;-webkit-text-stroke:0.84px;right:1279.7px;transform-origin:100% 0;transform:scaleX(0.9620);">$0.00</span>
<span class="t" style="top:1321.9px;font-size:22.6px;-webkit-text-stroke:0.84px;right:1077.8px;transform-origin:100% 0;transform:scaleX(0.9620);">$0.00</span>
<span class="t" style="top:1449.4px;font-size:32.5px;-webkit-text-stroke:1.20px;left:978.0px;transform:scaleX(0.9928);">Comments</span>
<div style="left:978px;top:1500px;width:832px;height:2px;background:#5b859b"></div>
<svg style="left:1788px;top:1454px;" width="17" height="16" viewBox="0 0 17 16"><path d="M2 9.5 L8.5 3 L15 9.5" fill="none" stroke="#d8d8da" stroke-width="2.3"/><path d="M1 14.5 H16" stroke="#d8d8da" stroke-width="2.5"/></svg>
<div style="left:978px;top:1502px;width:832px;height:80px;background:#1d1c21"></div>
<span class="t" style="top:1525.2px;font-size:23px;font-weight:700;-webkit-text-stroke:0.28px;color:#409cdb;left:1004.0px;transform:scaleX(0.9123);">ADD COMMENT</span>
<span class="t" style="top:1528.5px;font-size:23px;font-weight:700;-webkit-text-stroke:0.28px;color:#409cdb;left:1685.0px;transform:scaleX(0.8530);">SORT</span>
<svg style="left:1747.5px;top:1521.5px;" width="37" height="37" viewBox="0 0 24 24"><path fill="#f0f0f2" d="M4 12l1.41 1.41L11 7.83V20h2V7.83l5.58 5.59L20 12l-8-8-8 8z"/></svg>
<div style="left:990px;top:1566.5px;width:806px;height:2px;background:#55555a"></div>
<div style="left:1832px;top:102px;width:18px;height:1468px;background:#77777c;border-right:1.2px solid #2a2a2f;box-sizing:border-box"></div>
<div style="left:1834px;top:828.5px;width:3px;height:25.5px;background:#f4f4f6"></div>
<div style="left:1841.5px;top:828.5px;width:3px;height:25.5px;background:#f4f4f6"></div>
<svg style="left:1850px;top:160px;font-family:'Liberation Sans',sans-serif" width="1024" height="1410" viewBox="1850 160 1024 1410"><rect x="1850" y="160" width="1024" height="1410" fill="#f6f0ea"/>
<polygon fill="#c6ecb5" points="1850.0,680.8 1887.0,683.7 1895.5,696.5 1909.7,766.1 1867.1,764.7 1858.5,767.0 1850.0,759.0"/>
<polygon fill="#c6ecb5" points="2111.5,891.2 2152.8,901.1 2149.9,913.4 2198.2,911.9 2198.2,956.6 2185.5,958.0 2145.7,956.6 2141.4,926.7 2130.0,905.4 2115.8,929.6 2110.1,926.7"/>
<polygon fill="#c6ecb5" points="2014,1057 2060,1057 2060,1101 2016,1101"/>
<polygon fill="#d6f0cb" points="1937.0,1089.6 1943.8,1079.3 1966.2,1077.8 1966.2,1110.4 1979.6,1111.3 1979.6,1147.1 1937.0,1147.1"/>
<polygon fill="#c6ecb5" points="1949.8,1150.3 1960.4,1150.3 1959.8,1163.8 1949.8,1163.8"/>
<polygon fill="#c6ecb5" points="1850,1075 1858,1077 1856,1092 1850,1094"/>
<polygon fill="#c6ecb5" points="1908,1160 1917,1162 1917,1169 1908,1167"/>
<polygon fill="#f3e9c9" points="2002,1128 2012,1128 2012,1147 2002,1147"/>
<polygon fill="#c6ecb5" points="2019.1,1194.2 2059.8,1195.6 2059.8,1239.6 2052.4,1239.6 2046.2,1228.3 2034.8,1221.2 2020.6,1212.6"/>
<polygon fill="#d8f0cc" points="1922.5,1387.5 1990.7,1385.2 1990.7,1408.8 2002.1,1408.8 2002.1,1421.6 2012.0,1421.6 2012.0,1430.1 1922.5,1432.1"/>
<polygon fill="#f0e6c8" points="2225.3,1199.8 2236.6,1195.0 2242.3,1207.0 2238.0,1215.5 2226.7,1209.8"/>
<polygon fill="#c6ecb5" points="2349.1,1152.4 2504.4,1152.4 2504.4,1201.0 2362.6,1201.0 2362.6,1195.6 2349.1,1190.2"/>
<polygon fill="#c6ecb5" points="2362.6,1201.0 2449.1,1201.0 2449.1,1260.4 2376.1,1268.5 2376.1,1244.2 2388.3,1244.2 2388.3,1238.0 2376.1,1237.5 2376.1,1232.9 2362.6,1232.1"/>
<polygon fill="#c6ecb5" points="2330.2,1243.7 2341.6,1243.7 2341.6,1265.8 2376.1,1268.0 2386.9,1268.0 2357.8,1279.4 2356.7,1290.2 2346.4,1297.7 2334.3,1296.9 2338.9,1305.0 2338.3,1321.2 2345.9,1337.4 2330.2,1337.4"/>
<polygon fill="#ebe9de" stroke="#afd4f8" stroke-width="2" points="2656.2,1489.8 2683.2,1489.8 2708.8,1499.8 2701.7,1515.4 2707.4,1523.9 2733.0,1522.5 2748.6,1501.2 2755.7,1502.6 2758.6,1519.7 2767.1,1523.9 2782.7,1518.2 2797.0,1535.3 2809.7,1536.7 2824.0,1522.5 2824.0,1541.0 2851.0,1533.9 2858.1,1508.3 2874.0,1519.7 2874.0,1570.0 2659.1,1570.0 2659.1,1556.6 2647.7,1533.9 2663.3,1501.2"/>
<polygon fill="#afd4f8" points="2328.9,1176.7 2337.0,1174.0 2347.8,1176.2 2355.9,1184.8 2369.4,1182.1 2382.9,1188.9 2395.0,1190.8 2405.8,1189.7 2405.8,1170.0 2414.0,1171.3 2416.7,1180.0 2430.2,1185.4 2438.3,1182.7 2438.3,1194.3 2443.7,1198.9 2454.5,1194.3 2454.5,1171.3 2460.4,1171.9 2460.4,1183.5 2463.9,1192.4 2476.1,1192.4 2488.2,1184.8 2495.0,1168.6 2504.4,1165.4 2512.5,1171.3 2519.3,1161.1 2523.3,1163.2 2527.4,1174.0 2530.1,1201.0 2534.7,1229.4 2528.7,1241.0 2531.4,1252.3 2541.4,1266.7 2534.9,1268.5 2526.0,1261.8 2520.6,1251.0 2515.2,1251.8 2512.5,1241.5 2499.8,1267.2 2504.4,1274.0 2511.2,1279.4 2501.7,1287.5 2497.7,1296.9 2499.8,1303.7 2497.1,1313.1 2509.8,1321.2 2511.7,1334.7 2500.4,1330.7 2495.0,1326.6 2481.5,1344.2 2476.9,1349.6 2476.1,1333.4 2479.3,1325.3 2478.2,1307.7 2485.5,1292.3 2459.9,1303.7 2449.1,1297.7 2436.9,1300.4 2435.6,1306.9 2414.0,1309.1 2406.4,1329.3 2400.4,1310.4 2392.3,1307.7 2388.3,1322.6 2376.7,1333.4 2378.8,1357.7 2366.7,1372.5 2358.6,1396.8 2350.5,1392.8 2353.2,1386.0 2332.9,1386.0 2326.2,1395.5 2315.4,1396.8 2318.1,1404.9 2305.9,1418.4 2304.6,1427.4 2272.2,1427.4 2280.3,1400.9 2284.3,1390.1 2285.7,1369.8 2293.8,1367.1 2308.6,1369.8 2320.8,1360.4 2320.8,1352.8 2341.0,1339.3 2346.4,1338.8 2338.3,1321.2 2338.9,1305.0 2334.3,1296.9 2346.4,1297.7 2356.7,1290.2 2357.8,1279.4 2386.9,1268.0 2389.1,1260.4 2446.4,1259.1 2432.9,1251.0 2428.8,1238.8 2434.2,1229.4 2423.4,1219.9 2418.0,1221.3 2415.3,1215.1 2397.2,1227.5 2374.8,1205.9 2366.7,1214.0 2365.3,1201.0 2341.0,1194.3 2338.3,1187.5 2328.9,1182.7"/>
<polygon fill="#afd4f8" points="2272.2,1433.3 2304.6,1433.3 2310.0,1452.2 2310.0,1464.4 2281.6,1469.8 2288.4,1448.2 2276.2,1457.6 2260.0,1479.2 2260.0,1463.0 2265.4,1454.9 2273.5,1457.6 2283.0,1441.4"/>
<polygon fill="#afd4f8" points="1970.8,160.0 2000.7,160.0 1995.0,168.5 2000.7,184.2 1972.2,184.2 1969.4,171.4"/>
<polygon fill="#afd4f8" points="2842.4,408.7 2848.1,401.6 2849.5,407.3 2859.5,401.6 2874.0,407.3 2874.0,427.2 2862.3,427.8 2855.2,421.5 2849.5,413.0"/>
<polygon fill="#afd4f8" points="1933.9,599.8 1936.7,599.8 1936.7,629.6 1932.4,629.6 1931.9,621.1 1927.3,615.4 1929.0,606.9"/>
<polygon fill="#afd4f8" points="2176.9,1197.0 2184.0,1199.8 2172.7,1222.6 2165.6,1215.5"/>
<polygon fill="#afd4f8" points="2784,1159 2822,1148 2836,1160 2846,1150 2852,1168 2846,1215 2838,1232 2826,1222 2822,1196 2812,1190 2818,1172 2800,1180 2796,1170"/>
<path fill="none" stroke="#afd4f8" stroke-width="2.8" d="M2271,1488 L2256,1505 L2231,1508 L2234,1520 L2217,1570"/>
<path fill="none" stroke="#afd4f8" stroke-width="2" d="M2604,1551 L2635,1548 L2640,1540"/>
<rect x="2000" y="808" width="10" height="7" fill="none" stroke="#afd4f8" stroke-width="2"/>
<path fill="none" stroke="#d9d6d2" stroke-width="1.5" d="M1895,160 L1872,185 L1852,215 M1850,368 L1862,410 L1880,470 L1882,520 L1872,580 L1893,680 L1918,790 L1932,880 L1931,930 L1920,960 L1905,1120 L1893,1220 L1880,1290 L1862,1350 L1850,1372"/>
<path fill="none" stroke="#e6dfd7" stroke-width="6.5" stroke-linejoin="round" d="M1919,236 V1570 M2012.6,810 V1433 M2106,580 V1570 M2201.8,160 V530 L2194,548 L2188,575 L2190,590 L2196,620 L2199,680 L2200.5,720 V1400 L2201,1570 M2293.5,771 V1148 M2388.5,677 V1148 M2389,1433 V1570 M2483.5,205 V677 M2669.6,867 V1244.8 H2764.6 V1339 M2763.7,867 V1055.4 M2857,1055.4 V1570 M2250,202.5 H2373 L2385,196.5 L2390,202.5 L2424,203 L2483.5,205.5 M2081,581.5 H2188 M1850,676 H2874 M1850,769 L1916,770.5 H2293.5 M1850,865 H2250 L2362,864.5 L2874,867.5 M1850,959 L1930,960 L2246,959 M1850,1055 H2389 M2669.6,1055.4 H2857 L2874,1062 M1850,1148.3 H1902 M2208,1148.3 H2581 L2660,1120 L2737.8,1081.3 L2762,1067.6 L2764.5,1055.4 M1850,1243.3 H2200 M1850,1339.3 H2200 M2765,1339 H2874 M1850,1434 L2000,1433 H2200 L2362,1432.5 H2874 M1919,1010 L1928,990 L1930,962 M2199.3,1085.3 L2206.5,1100.2"/>
<path fill="none" stroke="#ffffff" stroke-width="4" stroke-linejoin="round" d="M1919,236 V1570 M2012.6,810 V1433 M2106,580 V1570 M2201.8,160 V530 L2194,548 L2188,575 L2190,590 L2196,620 L2199,680 L2200.5,720 V1400 L2201,1570 M2293.5,771 V1148 M2388.5,677 V1148 M2389,1433 V1570 M2483.5,205 V677 M2669.6,867 V1244.8 H2764.6 V1339 M2763.7,867 V1055.4 M2857,1055.4 V1570 M2250,202.5 H2373 L2385,196.5 L2390,202.5 L2424,203 L2483.5,205.5 M2081,581.5 H2188 M1850,676 H2874 M1850,769 L1916,770.5 H2293.5 M1850,865 H2250 L2362,864.5 L2874,867.5 M1850,959 L1930,960 L2246,959 M1850,1055 H2389 M2669.6,1055.4 H2857 L2874,1062 M1850,1148.3 H1902 M2208,1148.3 H2581 L2660,1120 L2737.8,1081.3 L2762,1067.6 L2764.5,1055.4 M1850,1243.3 H2200 M1850,1339.3 H2200 M2765,1339 H2874 M1850,1434 L2000,1433 H2200 L2362,1432.5 H2874 M1919,1010 L1928,990 L1930,962 M2199.3,1085.3 L2206.5,1100.2"/>
<path fill="none" stroke="#cbc4ee" stroke-width="1.6" stroke-dasharray="17 11.5" d="M1850,675.5 H2240 L2250,678 L2262,676 H2874"/>
<path fill="none" stroke="#f3b877" stroke-width="5.6" stroke-linejoin="round" d="M1902,1148.6 L1960,1149 H2196 M1903,1148 L1898.3,1170 L1891.2,1255 L1884,1306 L1872.7,1346 L1850,1386"/>
<path fill="none" stroke="#fdefbf" stroke-width="3.3" stroke-linejoin="round" d="M1902,1148.6 L1960,1149 H2196 M1903,1148 L1898.3,1170 L1891.2,1255 L1884,1306 L1872.7,1346 L1850,1386"/>
<path fill="none" stroke="#f0a253" stroke-width="10.2" stroke-linejoin="round" d="M2246.8,160 V900 C2247,940 2241,975 2233,1012 C2225,1042 2215,1075 2210,1106 M1850,1490.6 L1921,1485.4 L1992,1483.6 L2151,1483.3 L2177,1488 M2177,1489 L2200,1494 L2390,1451.5 L2858,1339 L2874,1335 M2177,1489 L2166,1508 L2138,1570"/>
<path fill="none" stroke="#f0a253" stroke-width="8.8" stroke-linejoin="round" d="M2210,1106 C2205,1135 2202.2,1160 2201.6,1195 L2201.3,1400 C2201,1445 2190,1462 2175,1486 M2201,1436 C2200,1458 2196,1472 2183,1486"/>
<polygon points="2139.4,1484.0 2155.6,1480.6 2167.8,1476.2 2177.2,1467.8 2188.0,1455.6 2196.1,1443.5 2198.8,1434.0 2204.9,1434.0 2202.9,1447.5 2197.5,1459.7 2192.1,1471.8 2194.8,1482.6 2201.5,1490.7 2202.2,1500.9 2182.6,1501.5 2173.2,1508.3 2166.4,1516.4 2161.0,1501.5 2152.9,1492.1 2139.4,1488.7" fill="#f9e07f" stroke="#f0a253" stroke-width="1.3" stroke-linejoin="round"/>
<path fill="none" stroke="#f9e07f" stroke-width="7.6" stroke-linejoin="round" d="M2246.8,160 V900 C2247,940 2241,975 2233,1012 C2225,1042 2215,1075 2210,1106 M1850,1490.6 L1921,1485.4 L1992,1483.6 L2151,1483.3 L2177,1488 M2177,1489 L2200,1494 L2390,1451.5 L2858,1339 L2874,1335 M2177,1489 L2166,1508 L2138,1570"/>
<path fill="none" stroke="#f9e07f" stroke-width="6.2" stroke-linejoin="round" d="M2210,1106 C2205,1135 2202.2,1160 2201.6,1195 L2201.3,1400 C2201,1445 2190,1462 2175,1486 M2201,1436 C2200,1458 2196,1472 2183,1486"/>
<path d="M2178.5,1476 L2189,1457 M2181,1468 L2186,1459" stroke="#f0a253" stroke-width="0.9" fill="none"/>
<g transform="translate(2225.6,297.1)"><path d="M5,1.5 C9,4 15,3.5 20,0.8 C25,3.5 31,4 35,1.5 L38.5,6 C35,11 36.5,15 38.5,19 C41,25 38,30 30,31 C25,31.8 22,32.5 20,34.5 C18,32.5 15,31.8 10,31 C2,30 -1,25 1.5,19 C3.5,15 5,11 1.5,6 Z" fill="#fff" stroke="#8f8f8f" stroke-width="1.2"/><text x="20" y="22.5" font-size="15.5" text-anchor="middle" fill="#222">77</text></g>
<g transform="translate(2226.6,808.0)"><path d="M5,1.5 C9,4 15,3.5 20,0.8 C25,3.5 31,4 35,1.5 L38.5,6 C35,11 36.5,15 38.5,19 C41,25 38,30 30,31 C25,31.8 22,32.5 20,34.5 C18,32.5 15,31.8 10,31 C2,30 -1,25 1.5,19 C3.5,15 5,11 1.5,6 Z" fill="#fff" stroke="#8f8f8f" stroke-width="1.2"/><text x="20" y="22.5" font-size="15.5" text-anchor="middle" fill="#222">77</text></g>
<g transform="translate(1861.5,1307.2)"><path d="M5,1.5 C9,4 15,3.5 20,0.8 C25,3.5 31,4 35,1.5 L38.5,6 C35,11 36.5,15 38.5,19 C41,25 38,30 30,31 C25,31.8 22,32.5 20,34.5 C18,32.5 15,31.8 10,31 C2,30 -1,25 1.5,19 C3.5,15 5,11 1.5,6 Z" fill="#fff" stroke="#8f8f8f" stroke-width="1.2"/><text x="20" y="22.5" font-size="15.5" text-anchor="middle" fill="#222">77</text></g>
<g transform="translate(2214.3,984.3)" ><path d="M1,8 C0,22 8,29.5 19,33.5 C30,29.5 38,22 37,8 Z" fill="#5ea4ea" stroke="#fff" stroke-width="1.2"/><path d="M2,1.8 C7,3.5 14,2.5 19,0.5 C24,2.5 31,3.5 36,1.8 L37,8 H1 Z" fill="#e25d4c" stroke="#fff" stroke-width="1"/><text x="19" y="24.5" font-size="15.5" text-anchor="middle" fill="#fff">35</text></g>
<g transform="translate(2352.0,1439.6)" ><path d="M1,8 C0,22 8,29.5 19,33.5 C30,29.5 38,22 37,8 Z" fill="#5ea4ea" stroke="#fff" stroke-width="1.2"/><path d="M2,1.8 C7,3.5 14,2.5 19,0.5 C24,2.5 31,3.5 36,1.8 L37,8 H1 Z" fill="#e25d4c" stroke="#fff" stroke-width="1"/><text x="19" y="24.5" font-size="15.5" text-anchor="middle" fill="#fff">44</text></g>
<g transform="translate(2858.0,1318.0)" ><path d="M1,8 C0,22 8,29.5 19,33.5 C30,29.5 38,22 37,8 Z" fill="#5ea4ea" stroke="#fff" stroke-width="1.2"/><path d="M2,1.8 C7,3.5 14,2.5 19,0.5 C24,2.5 31,3.5 36,1.8 L37,8 H1 Z" fill="#e25d4c" stroke="#fff" stroke-width="1"/><text x="19" y="24.5" font-size="15.5" text-anchor="middle" fill="#fff">4</text></g>
<g><rect x="2297.5" y="1138.7" width="26.6" height="22" fill="#fff" stroke="#8a8a8a" stroke-width="1.3"/><text x="2310.8" y="1155.5" font-size="16" text-anchor="middle" fill="#222">66</text></g>
<g><rect x="2186.4" y="1318.7" width="26.6" height="22" fill="#fff" stroke="#8a8a8a" stroke-width="1.3"/><text x="2199.7" y="1335.5" font-size="16" text-anchor="middle" fill="#222">66</text></g>
<text x="2183.5" y="213.2" font-size="18.5" fill="#7a7a7a" textLength="101.0" lengthAdjust="spacing" text-anchor="start" font-weight="700" paint-order="stroke" stroke="#ffffff" stroke-width="3.2" stroke-linejoin="round">LAKEVIEW</text>
<text x="1864.2" y="593.5" font-size="18.5" fill="#6e6e6e" textLength="106.0" lengthAdjust="spacing" text-anchor="start" font-weight="700" paint-order="stroke" stroke="#ffffff" stroke-width="3.2" stroke-linejoin="round">WATERLOO</text>
<text x="2705.8" y="1067.6" font-size="18.5" fill="#7a7a7a" textLength="86.0" lengthAdjust="spacing" text-anchor="start" font-weight="700" paint-order="stroke" stroke="#ffffff" stroke-width="3.2" stroke-linejoin="round">ARCADIA</text>
<text x="1874.0" y="1147.0" font-size="19" fill="#7a7a7a" textLength="93.5" lengthAdjust="spacing" text-anchor="start" font-weight="700" paint-order="stroke" stroke="#ffffff" stroke-width="3.2" stroke-linejoin="round">EDMOND</text>
<text x="2164.7" y="1537.5" font-size="18.5" fill="#7a7a7a" textLength="87.6" lengthAdjust="spacing" text-anchor="start" font-weight="700" paint-order="stroke" stroke="#ffffff" stroke-width="3.2" stroke-linejoin="round">WITCHER</text>
<text x="2812.0" y="1143.3" font-size="17.5" fill="#7a7a7a" textLength="51.0" lengthAdjust="spacing" text-anchor="start" font-weight="700" paint-order="stroke" stroke="#ffffff" stroke-width="3.2" stroke-linejoin="round">LAKE</text>
<text x="2797.0" y="1164.5" font-size="17.5" fill="#7a7a7a" textLength="105.0" lengthAdjust="spacing" text-anchor="start" font-weight="700" paint-order="stroke" stroke="#ffffff" stroke-width="3.2" stroke-linejoin="round">HIWASSEE</text>
<text x="2058.0" y="585.6" font-size="17.5" fill="#636363" textLength="106.0" lengthAdjust="spacing" text-anchor="start" paint-order="stroke" stroke="#ffffff" stroke-width="3.2" stroke-linejoin="round">Simmons Rd</text>
<text x="2112.0" y="680.2" font-size="17.5" fill="#636363" textLength="119.8" lengthAdjust="spacing" text-anchor="start" paint-order="stroke" stroke="#ffffff" stroke-width="3.2" stroke-linejoin="round">E Waterloo Rd</text>
<text x="2812.6" y="870.0" font-size="17.5" fill="#636363" textLength="150.0" lengthAdjust="spacing" text-anchor="start" paint-order="stroke" stroke="#ffffff" stroke-width="3.2" stroke-linejoin="round">E Coffee Creek Rd</text>
<text x="1857.6" y="1056.6" font-size="17.5" fill="#636363" textLength="20.0" lengthAdjust="spacing" text-anchor="start" paint-order="stroke" stroke="#ffffff" stroke-width="3.2" stroke-linejoin="round">Rd</text>
<text x="2020.5" y="1153.0" font-size="17.5" fill="#636363" textLength="73.5" lengthAdjust="spacing" text-anchor="start" paint-order="stroke" stroke="#ffffff" stroke-width="3.2" stroke-linejoin="round">E 2nd St</text>
<text x="2457.0" y="1153.0" font-size="17.5" fill="#636363" textLength="70.5" lengthAdjust="spacing" text-anchor="start" paint-order="stroke" stroke="#ffffff" stroke-width="3.2" stroke-linejoin="round">E 2nd St</text>
<text x="2004.4" y="1341.6" font-size="17.5" fill="#636363" textLength="77.3" lengthAdjust="spacing" text-anchor="start" paint-order="stroke" stroke="#ffffff" stroke-width="3.2" stroke-linejoin="round">E 33rd St</text>
<text x="2027.7" y="1436.0" font-size="17.5" fill="#636363" textLength="122.2" lengthAdjust="spacing" text-anchor="start" paint-order="stroke" stroke="#ffffff" stroke-width="3.2" stroke-linejoin="round">E Memorial Rd</text>
<text x="2820.3" y="1437.3" font-size="17.5" fill="#636363" textLength="122.0" lengthAdjust="spacing" text-anchor="start" paint-order="stroke" stroke="#ffffff" stroke-width="3.2" stroke-linejoin="round">E Memorial Rd</text>
<text x="1831.0" y="1492.5" font-size="17.5" fill="#6b6250" textLength="169.5" lengthAdjust="spacing" text-anchor="start" transform="rotate(-2.2 1831.0 1492.5)">John Kilpatrick Tpke</text>
<text x="2308.6" y="1262.8" font-size="17.5" fill="#5c9c55" textLength="99.1" lengthAdjust="spacing" text-anchor="start" font-style="italic" paint-order="stroke" stroke="#ffffff" stroke-width="3.2" stroke-linejoin="round">Spring Creek</text>
<text x="2342.4" y="1282.2" font-size="17.5" fill="#5c9c55" textLength="35.6" lengthAdjust="spacing" text-anchor="start" font-style="italic" paint-order="stroke" stroke="#ffffff" stroke-width="3.2" stroke-linejoin="round">Park</text>
<text x="2477.2" y="319.0" font-size="17.5" fill="#636363" textLength="126.0" lengthAdjust="spacing" text-anchor="start" paint-order="stroke" stroke="#ffffff" stroke-width="3.2" stroke-linejoin="round" transform="rotate(90 2477.2 319.0)">S Douglas Blvd</text>
<text x="1916.8" y="784.0" font-size="17.5" fill="#636363" textLength="98.0" lengthAdjust="spacing" text-anchor="start" paint-order="stroke" stroke="#ffffff" stroke-width="3.2" stroke-linejoin="round" transform="rotate(82 1916.8 784.0)">N Broadway</text>
<text x="2008.8" y="850.5" font-size="17.5" fill="#636363" textLength="108.5" lengthAdjust="spacing" text-anchor="start" paint-order="stroke" stroke="#ffffff" stroke-width="3.2" stroke-linejoin="round" transform="rotate(90 2008.8 850.5)">N Bryant Ave</text>
<text x="2102.4" y="854.8" font-size="17.5" fill="#636363" textLength="116.5" lengthAdjust="spacing" text-anchor="start" paint-order="stroke" stroke="#ffffff" stroke-width="3.2" stroke-linejoin="round" transform="rotate(90 2102.4 854.8)">N Coltrane Rd</text>
<text x="2384.2" y="849.8" font-size="17.5" fill="#636363" textLength="127.0" lengthAdjust="spacing" text-anchor="start" paint-order="stroke" stroke="#ffffff" stroke-width="3.2" stroke-linejoin="round" transform="rotate(90 2384.2 849.8)">N Midwest Blvd</text>
<text x="2666.2" y="926.0" font-size="17.5" fill="#636363" textLength="153.5" lengthAdjust="spacing" text-anchor="start" paint-order="stroke" stroke="#ffffff" stroke-width="3.2" stroke-linejoin="round" transform="rotate(90 2666.2 926.0)">N Westminster Rd</text>
<text x="2759.5" y="903.5" font-size="17.5" fill="#636363" textLength="125.0" lengthAdjust="spacing" text-anchor="start" paint-order="stroke" stroke="#ffffff" stroke-width="3.2" stroke-linejoin="round" transform="rotate(90 2759.5 903.5)">N Anderson Rd</text>
<text x="2102.4" y="1475.6" font-size="17.5" fill="#636363" textLength="116.5" lengthAdjust="spacing" text-anchor="start" paint-order="stroke" stroke="#ffffff" stroke-width="3.2" stroke-linejoin="round" transform="rotate(90 2102.4 1475.6)">N Coltrane Rd</text>
<text x="2016.8" y="1312.5" font-size="17.5" fill="#636363" textLength="108.5" lengthAdjust="spacing" text-anchor="start" paint-order="stroke" stroke="#ffffff" stroke-width="3.2" stroke-linejoin="round" transform="rotate(-90 2016.8 1312.5)">S Bryant Ave</text>
<text x="2110.2" y="1348.5" font-size="17.5" fill="#636363" textLength="115.5" lengthAdjust="spacing" text-anchor="start" paint-order="stroke" stroke="#ffffff" stroke-width="3.2" stroke-linejoin="round" transform="rotate(-90 2110.2 1348.5)">S Coltrane Rd</text>
<text x="1923.2" y="183.5" font-size="17.5" fill="#636363" textLength="98.0" lengthAdjust="spacing" text-anchor="start" paint-order="stroke" stroke="#ffffff" stroke-width="3.2" stroke-linejoin="round" transform="rotate(-90 1923.2 183.5)">S Broadway</text>
<path fill="none" stroke="#2f8df3" stroke-width="4.5" stroke-linecap="round" d="M2261,770.7 H2560 L2671.5,772.3"/>
<path fill="none" stroke="#2f8df3" stroke-width="4.5" stroke-linecap="round" d="M2245,959.2 H2560 L2671.5,961.6"/>
<path fill="none" stroke="#343332" stroke-width="5.8" stroke-linecap="round" stroke-linejoin="round" d="M1864.8,675.7 h5.2 M1908.2,675.7 H1936 M2085.8,722.9 H2123.0 M2159.1,722.9 h5.2 M2200.1,722.9 H2237.3 M2273.4,722.9 h5.2 M2314.4,722.9 H2351.6 M2387.7,722.9 h5.2 M2428.7,722.9 H2465.9 M2502.0,722.9 h5.2 M2543.0,722.9 H2580.2 M2616.3,722.9 h5.2 M2657.3,723.2 L2694.5,724.8 M2730.6,724.8 h5.2 M2764.3,725.5 V756.6 M2764.3,795.1 v5.2 M2763.5,838 V866 H2770 M2806,866.5 H2813 M2852,866 H2857 V891 M2857,929.0 v5.2 M2857,972.5 V1003.7 M2857,1042.7 v5.2 M2857,1085.5 V1102.7 H2874 M2669.6,1052 V1008 H2691 M2727.4,1008 h5.2 M2767.5,1008 H2788.8 V1040.5 M2788.8,1058.9 v5.2 M2788.8,1078.4 v5.2 M2788.8,1102.5 V1126.2 H2758.5 M2735.2,1126.2 h5.2 M2715.4,1126.2 h5.2 M2698.5,1126.2 H2669.6 V1102.5 M2669.6,1078.4 v5.2 M2769.5,1150.7 H2857.5 V1204 M2764.6,1172.5 V1204 M2764.6,1227.5 V1244.8 H2779.5 M2806,1244.8 H2840.5 M2857.5,1220.8 v5.2 M2864.5,1244.8 H2857.5 V1278.5 M2857.5,1315.2 v5.2 M2483.7,1358 V1338.6 H2494 M2534.9,1338.6 h5.2 M2577.8,1338.6 H2611.3 M2648.9,1338.6 h5.2 M2691.8,1338.6 H2725.3 M2762.9,1338.6 h5.2 M2805.8,1338.6 H2839.3 M2201,1416 V1384.6 H2209 M2240.4,1384.6 h5.2 M2283.5,1384.6 H2316.2 M2354.4,1384.6 h5.2 M2395.8,1384.6 H2430.2 M2468.1,1384.6 h5.2 M2103.1,1386 h5.2 M2105.7,1386 V1391 M2044.5,1386.3 H2050 L2055,1378.5 L2060,1386.3 H2070.5 M2004.4,1386.5 h5.2 M1932.4,1387 L1966.6,1386 M1867,1386 L1873,1389 M1902.7,1400.8 h5.2 M1871.3,1423.5 V1434.4 H1899 M2108.6,1431 H2136 M2173.4,1431.5 h5.2"/>
<defs><linearGradient id="mg" x1="0" y1="0" x2="0" y2="1"><stop offset="0" stop-color="#f19781"/><stop offset="0.55" stop-color="#e06a4c"/><stop offset="1" stop-color="#d2472b"/></linearGradient>
<radialGradient id="ms"><stop offset="0" stop-color="#000" stop-opacity=".42"/><stop offset="1" stop-color="#000" stop-opacity="0"/></radialGradient>
</defs>
<g transform="translate(2396.2,736.2)"><ellipse cx="26.5" cy="66" rx="21" ry="4.6" fill="url(#ms)"/>
<path d="M5,0.8 H48 a4.4,4.4 0 0 1 4.4,4.4 V48 a4.4,4.4 0 0 1 -4.4,4.4 H37.5 L26.5,65.6 L15.5,52.4 H5 a4.4,4.4 0 0 1 -4.4,-4.4 V5.2 a4.4,4.4 0 0 1 4.4,-4.4 Z" fill="url(#mg)" stroke="#b43d27" stroke-width="1.6"/>
<path d="M5.5,3.2 H47.5" stroke="#f8b7a6" stroke-width="1.4" fill="none"/>
<g fill="none" stroke-linecap="round" stroke-linejoin="round"><path d="M16.2,40 L34.6,21.8" stroke="#a4412d" stroke-width="9.6"/><path d="M17.2,25 L26.6,15.2 Q30.6,11.4 34.8,15 L43.2,22.6" stroke="#a4412d" stroke-width="10.2" stroke-linecap="butt"/>
<path d="M16.2,40 L34.6,21.8" stroke="#f3f3f3" stroke-width="7.2"/><path d="M17.2,25 L26.6,15.2 Q30.6,11.4 34.8,15 L43.2,22.6" stroke="#f3f3f3" stroke-width="7.8" stroke-linecap="butt"/><path d="M31.2,18.6 L38.2,25.4" stroke="#d98b78" stroke-width="1.2"/><path d="M20.6,23.4 L22.6,26.4" stroke="#d96246" stroke-width="2"/></g></g>
<g transform="translate(2301.8,925.8)"><ellipse cx="26.5" cy="66" rx="21" ry="4.6" fill="url(#ms)"/>
<path d="M5,0.8 H48 a4.4,4.4 0 0 1 4.4,4.4 V48 a4.4,4.4 0 0 1 -4.4,4.4 H37.5 L26.5,65.6 L15.5,52.4 H5 a4.4,4.4 0 0 1 -4.4,-4.4 V5.2 a4.4,4.4 0 0 1 4.4,-4.4 Z" fill="url(#mg)" stroke="#b43d27" stroke-width="1.6"/>
<path d="M5.5,3.2 H47.5" stroke="#f8b7a6" stroke-width="1.4" fill="none"/>
<g fill="none" stroke-linecap="round" stroke-linejoin="round"><path d="M16.2,40 L34.6,21.8" stroke="#a4412d" stroke-width="9.6"/><path d="M17.2,25 L26.6,15.2 Q30.6,11.4 34.8,15 L43.2,22.6" stroke="#a4412d" stroke-width="10.2" stroke-linecap="butt"/>
<path d="M16.2,40 L34.6,21.8" stroke="#f3f3f3" stroke-width="7.2"/><path d="M17.2,25 L26.6,15.2 Q30.6,11.4 34.8,15 L43.2,22.6" stroke="#f3f3f3" stroke-width="7.8" stroke-linecap="butt"/><path d="M31.2,18.6 L38.2,25.4" stroke="#d98b78" stroke-width="1.2"/><path d="M20.6,23.4 L22.6,26.4" stroke="#d96246" stroke-width="2"/></g></g>
<g transform="translate(2548.4,925.8)"><ellipse cx="26.5" cy="66" rx="21" ry="4.6" fill="url(#ms)"/>
<path d="M5,0.8 H48 a4.4,4.4 0 0 1 4.4,4.4 V48 a4.4,4.4 0 0 1 -4.4,4.4 H37.5 L26.5,65.6 L15.5,52.4 H5 a4.4,4.4 0 0 1 -4.4,-4.4 V5.2 a4.4,4.4 0 0 1 4.4,-4.4 Z" fill="url(#mg)" stroke="#b43d27" stroke-width="1.6"/>
<path d="M5.5,3.2 H47.5" stroke="#f8b7a6" stroke-width="1.4" fill="none"/>
<g fill="none" stroke-linecap="round" stroke-linejoin="round"><path d="M16.2,40 L34.6,21.8" stroke="#a4412d" stroke-width="9.6"/><path d="M17.2,25 L26.6,15.2 Q30.6,11.4 34.8,15 L43.2,22.6" stroke="#a4412d" stroke-width="10.2" stroke-linecap="butt"/>
<path d="M16.2,40 L34.6,21.8" stroke="#f3f3f3" stroke-width="7.2"/><path d="M17.2,25 L26.6,15.2 Q30.6,11.4 34.8,15 L43.2,22.6" stroke="#f3f3f3" stroke-width="7.8" stroke-linecap="butt"/><path d="M31.2,18.6 L38.2,25.4" stroke="#d98b78" stroke-width="1.2"/><path d="M20.6,23.4 L22.6,26.4" stroke="#d96246" stroke-width="2"/></g></g>
<g transform="translate(2332.8,1001.8)"><ellipse cx="26.5" cy="66" rx="21" ry="4.6" fill="url(#ms)"/>
<path d="M5,0.8 H48 a4.4,4.4 0 0 1 4.4,4.4 V48 a4.4,4.4 0 0 1 -4.4,4.4 H37.5 L26.5,65.6 L15.5,52.4 H5 a4.4,4.4 0 0 1 -4.4,-4.4 V5.2 a4.4,4.4 0 0 1 4.4,-4.4 Z" fill="url(#mg)" stroke="#b43d27" stroke-width="1.6"/>
<path d="M5.5,3.2 H47.5" stroke="#f8b7a6" stroke-width="1.4" fill="none"/>
<g fill="none" stroke-linecap="round" stroke-linejoin="round"><path d="M16.2,40 L34.6,21.8" stroke="#a4412d" stroke-width="9.6"/><path d="M17.2,25 L26.6,15.2 Q30.6,11.4 34.8,15 L43.2,22.6" stroke="#a4412d" stroke-width="10.2" stroke-linecap="butt"/>
<path d="M16.2,40 L34.6,21.8" stroke="#f3f3f3" stroke-width="7.2"/><path d="M17.2,25 L26.6,15.2 Q30.6,11.4 34.8,15 L43.2,22.6" stroke="#f3f3f3" stroke-width="7.8" stroke-linecap="butt"/><path d="M31.2,18.6 L38.2,25.4" stroke="#d98b78" stroke-width="1.2"/><path d="M20.6,23.4 L22.6,26.4" stroke="#d96246" stroke-width="2"/></g></g>
<rect x="1850" y="1554" width="1024" height="16" fill="#ffffff" fill-opacity=".68"/>
<text x="1858.5" y="1577" font-size="25" fill="#323232" textLength="831" lengthAdjust="spacingAndGlyphs">Texas Parks &amp; Wildlife, Esri, HERE, Garmin, SafeGraph, METI/NASA, USGS, EPA, NPS, USDA | Azt</text>
<text x="2728.7" y="1577" font-size="25" fill="#323232" textLength="136.5" lengthAdjust="spacingAndGlyphs">Powered by Esri</text>
<rect x="2872.6" y="160" width="1.4" height="1410" fill="#4a4a4a"/></svg>
<div style="left:1850px;top:102px;width:1024px;height:59px;background:#4295eb;border-bottom:2px solid #2f6fd0;box-sizing:border-box"></div>
<span class="t" style="top:120.5px;font-size:23.7px;-webkit-text-stroke:0.50px;left:1871.5px;transform:scaleX(0.9886);letter-spacing:1.05px;">Base Maps</span>
<span class="t" style="top:120.5px;font-size:23.7px;-webkit-text-stroke:0.50px;left:2043.5px;transform:scaleX(1.0044);letter-spacing:1.05px;">Bookmarks</span>
<span class="t" style="top:120.5px;font-size:23.7px;-webkit-text-stroke:0.50px;left:2217.0px;transform:scaleX(0.9842);letter-spacing:1.05px;">Create Activity</span>
<span class="t" style="top:120.5px;font-size:23.7px;-webkit-text-stroke:0.50px;left:2427.0px;transform:scaleX(0.9745);letter-spacing:1.05px;">Data View</span>
<span class="t" style="top:120.5px;font-size:23.7px;-webkit-text-stroke:0.50px;left:2586.5px;transform:scaleX(0.9606);letter-spacing:1.05px;">Editor</span>
<div style="left:2820.5px;top:128px;width:6.5px;height:6.5px;background:#fff;border-radius:50%"></div>
<div style="left:2830.1px;top:128px;width:6.5px;height:6.5px;background:#fff;border-radius:50%"></div>
<div style="left:2839.7px;top:128px;width:6.5px;height:6.5px;background:#fff;border-radius:50%"></div>
<div style="left:1874px;top:184px;width:50.5px;height:52px;background:#fff;box-shadow:0 1px 4px rgba(0,0,0,.32)"></div>
<div style="left:1936px;top:184px;width:146.3px;height:625.6px;background:#fff;box-shadow:0 1px 4px rgba(0,0,0,.32)"></div>
<div style="left:2800px;top:184px;width:52px;height:52px;background:#fff;box-shadow:0 1px 4px rgba(0,0,0,.32)"></div>
<div style="left:2020px;top:296px;width:52px;height:52px;background:#4b4b4b"></div>
<div style="left:1946px;top:420px;width:52px;height:49.6px;background:#4b4b4b"></div>
<svg style="left:1850px;top:160px" width="1024" height="700" viewBox="1850 160 1024 700"><g fill="none" stroke="#5f5f5f" stroke-width="1.7">
<path d="M1899,200 L1889.5,210.5 L1899,221 M1908.5,200 L1899,210.5 L1908.5,221"/>
<rect x="1961.8" y="208.6" width="20.8" height="20"/>
<path d="M1963.5,263.5 L1971.5,270 L1981,259.5 V279 H1963.5 Z"/>
<path d="M1962,327.5 L1968.5,317.5 L1975.5,324 L1982.5,315"/><rect x="1960" y="326.3" width="3.4" height="3.4" fill="#fff"/><rect x="1966.8" y="315.3" width="3.4" height="3.4" fill="#fff"/><rect x="1974" y="322.8" width="3.4" height="3.4" fill="#fff"/><rect x="1981" y="313" width="3.4" height="3.4" fill="#fff"/>
<path d="M1963,366.5 A11,11 0 1 1 1962,375.5 M1961.8,360.5 V367.3 H1968.8"/><circle cx="1972.7" cy="371.5" r=".6"/>
<circle cx="2042" cy="214" r="8.3"/><path d="M2048,220 L2057,229 M2037.5,214 H2046.5 M2042,209.5 V218.5"/>
<circle cx="2042" cy="264.5" r="8.3"/><path d="M2048,270.5 L2057,279.5 M2037.5,264.5 H2046.5"/>
<path d="M2035.5,360.5 L2056.5,381.5 M2056.5,360.5 L2035.5,381.5 M2035.5,367 V360.5 H2042 M2050,360.5 H2056.5 V367 M2056.5,375 V381.5 H2050 M2042,381.5 H2035.5 V375"/>
<circle cx="2045.2" cy="422" r="11.2"/><path d="M2045.2,410.8 V417 M2045.2,427 V433.2 M2034,422 H2040.2 M2050.2,422 H2056.4"/>
<path d="M2035,466 H2056 M2041,464 H2050 M2037,468.5 L2038.5,487 H2052.5 L2054,468.5 M2042,470.5 V484 M2045.5,470.5 V484 M2049,470.5 V484"/>
<rect x="2812.5" y="198" width="16" height="16"/><path d="M2831.5,201.5 V217 H2816 M2834.5,205 V220 H2819.5" /><path d="M2820,198.5 L2817.5,203 L2820,206 L2816.5,209.5 L2819,213.5 M2824.5,202 L2821,208 L2826.5,210"/>
</g>
<g fill="none" stroke="#fff" stroke-width="1.7"><path d="M2034,321.5 H2057.5 M2045.7,309.8 V333.3 M2041.5,314 L2045.7,309.8 L2050,314 M2041.5,329 L2045.7,333.3 L2050,329 M2038.2,317.3 L2034,321.5 L2038.2,325.7 M2053.3,317.3 L2057.5,321.5 L2053.3,325.7"/>
<path d="M1984,448.5 V455 H1960 V435 H1984 V442" stroke-width="1.9"/><path d="M1976,451 H1988 M1982,445 V457" stroke-width="3"/></g>
<g fill="none" stroke="#bdbdbd" stroke-width="1.6"><path d="M1960,494 H1983.5 M1971.7,482.3 V505.8 M1960,546 H1983.5"/><rect x="1968" y="585" width="16.5" height="13.5"/><path d="M1968,588.5 H1984.5"/><rect x="1960" y="594" width="16.5" height="13.5" fill="#fff"/><path d="M1960,597.5 H1976.5"/></g>
<path d="M1946,399 H1998 M1946,624.8 H1998" stroke="#cfcfcf" stroke-width="1.5"/>
<circle cx="1971.7" cy="661.8" r="9" fill="none" stroke="#555" stroke-width="1.3"/><text x="1971.7" y="667.4" font-family="Liberation Serif,serif" font-size="16.5" text-anchor="middle" fill="#555">i</text>
<circle cx="1971.7" cy="712" r="9" fill="none" stroke="#555" stroke-width="1.3"/><text x="1971.7" y="717.6" font-family="Liberation Serif,serif" font-size="16.5" text-anchor="middle" fill="#555">i</text>
<circle cx="1971.7" cy="763.8" r="9" fill="none" stroke="#555" stroke-width="1.3"/><text x="1971.7" y="769.4" font-family="Liberation Serif,serif" font-size="16.5" text-anchor="middle" fill="#555">i</text>
<text x="1972.3" y="688" font-family="Liberation Serif,serif" font-size="18.5" text-anchor="middle" fill="#555" textLength="21.5" lengthAdjust="spacingAndGlyphs">All</text>
<text x="1972.3" y="738.2" font-family="Liberation Serif,serif" font-size="18.5" text-anchor="middle" fill="#555" textLength="26.5" lengthAdjust="spacingAndGlyphs">Top</text>
<text x="1972.3" y="789.8" font-family="Liberation Serif,serif" font-size="18.5" text-anchor="middle" fill="#555" textLength="49.3" lengthAdjust="spacingAndGlyphs">Visible</text></svg>
<div style="left:0px;top:0px;width:2874px;height:102px;background:#23609b;box-shadow:0 3px 10px 1px rgba(0,0,0,.55)"></div>
<span class="t" style="top:43.6px;font-size:26.5px;-webkit-text-stroke:0.56px;color:#b3c8de;left:10.0px;transform:scaleX(0.9596);">Project Summary</span>
<svg style="left:226px;top:39.2px;" width="36" height="36" viewBox="0 0 24 24"><path fill="#a9c1da" d="M10 6L8.59 7.41 13.17 12l-4.58 4.59L10 18l6-6z"/></svg>
<span class="t" style="top:43.6px;font-size:26.5px;-webkit-text-stroke:0.56px;left:283.2px;transform:scaleX(0.9588);">Project Details</span>
<div style="left:481.9px;top:45.0px;width:7.8px;height:7.8px;background:#fff;border-radius:50%"></div>
<div style="left:481.9px;top:53.2px;width:7.8px;height:7.8px;background:#fff;border-radius:50%"></div>
<div style="left:481.9px;top:61.50000000000001px;width:7.8px;height:7.8px;background:#fff;border-radius:50%"></div>
<svg style="left:2630.5px;top:36.8px;" width="39" height="39" viewBox="0 0 24 24"><path fill="#e9eff6" d="M1 21h22L12 2 1 21zm12-3h-2v-2h2v2zm0-4h-2v-4h2v4z"/></svg>
<span class="t" style="top:45.3px;font-size:22.8px;font-weight:700;-webkit-text-stroke:0.27px;color:#789fc9;left:2720.5px;transform:scaleX(0.9273);">SAVE</span>
<div style="left:2802px;top:22px;width:2px;height:67px;background:#fff"></div>
<svg style="left:2821px;top:36.5px;" width="40" height="40" viewBox="0 0 24 24"><path fill="#e9eff6" d="M20.5 3l-.16.03L15 5.1 9 3 3.36 4.9c-.21.07-.36.25-.36.48V20.5c0 .28.22.5.5.5l.16-.03L9 18.9l6 2.1 5.64-1.9c.21-.07.36-.25.36-.48V3.5c0-.28-.22-.5-.5-.5zM15 19l-6-2.11V5l6 2.11V19z"/></svg>
</div>
<script>(function(){var r=document.getElementById('root');function f(){var s=window.innerWidth/2874;if(s>0&&Math.abs(s-1)>0.002){r.style.transformOrigin='0 0';r.style.transform='scale('+s+')';}else{r.style.transform='';}}f();window.addEventListener('resize',f);})();</script>
</body></html>
